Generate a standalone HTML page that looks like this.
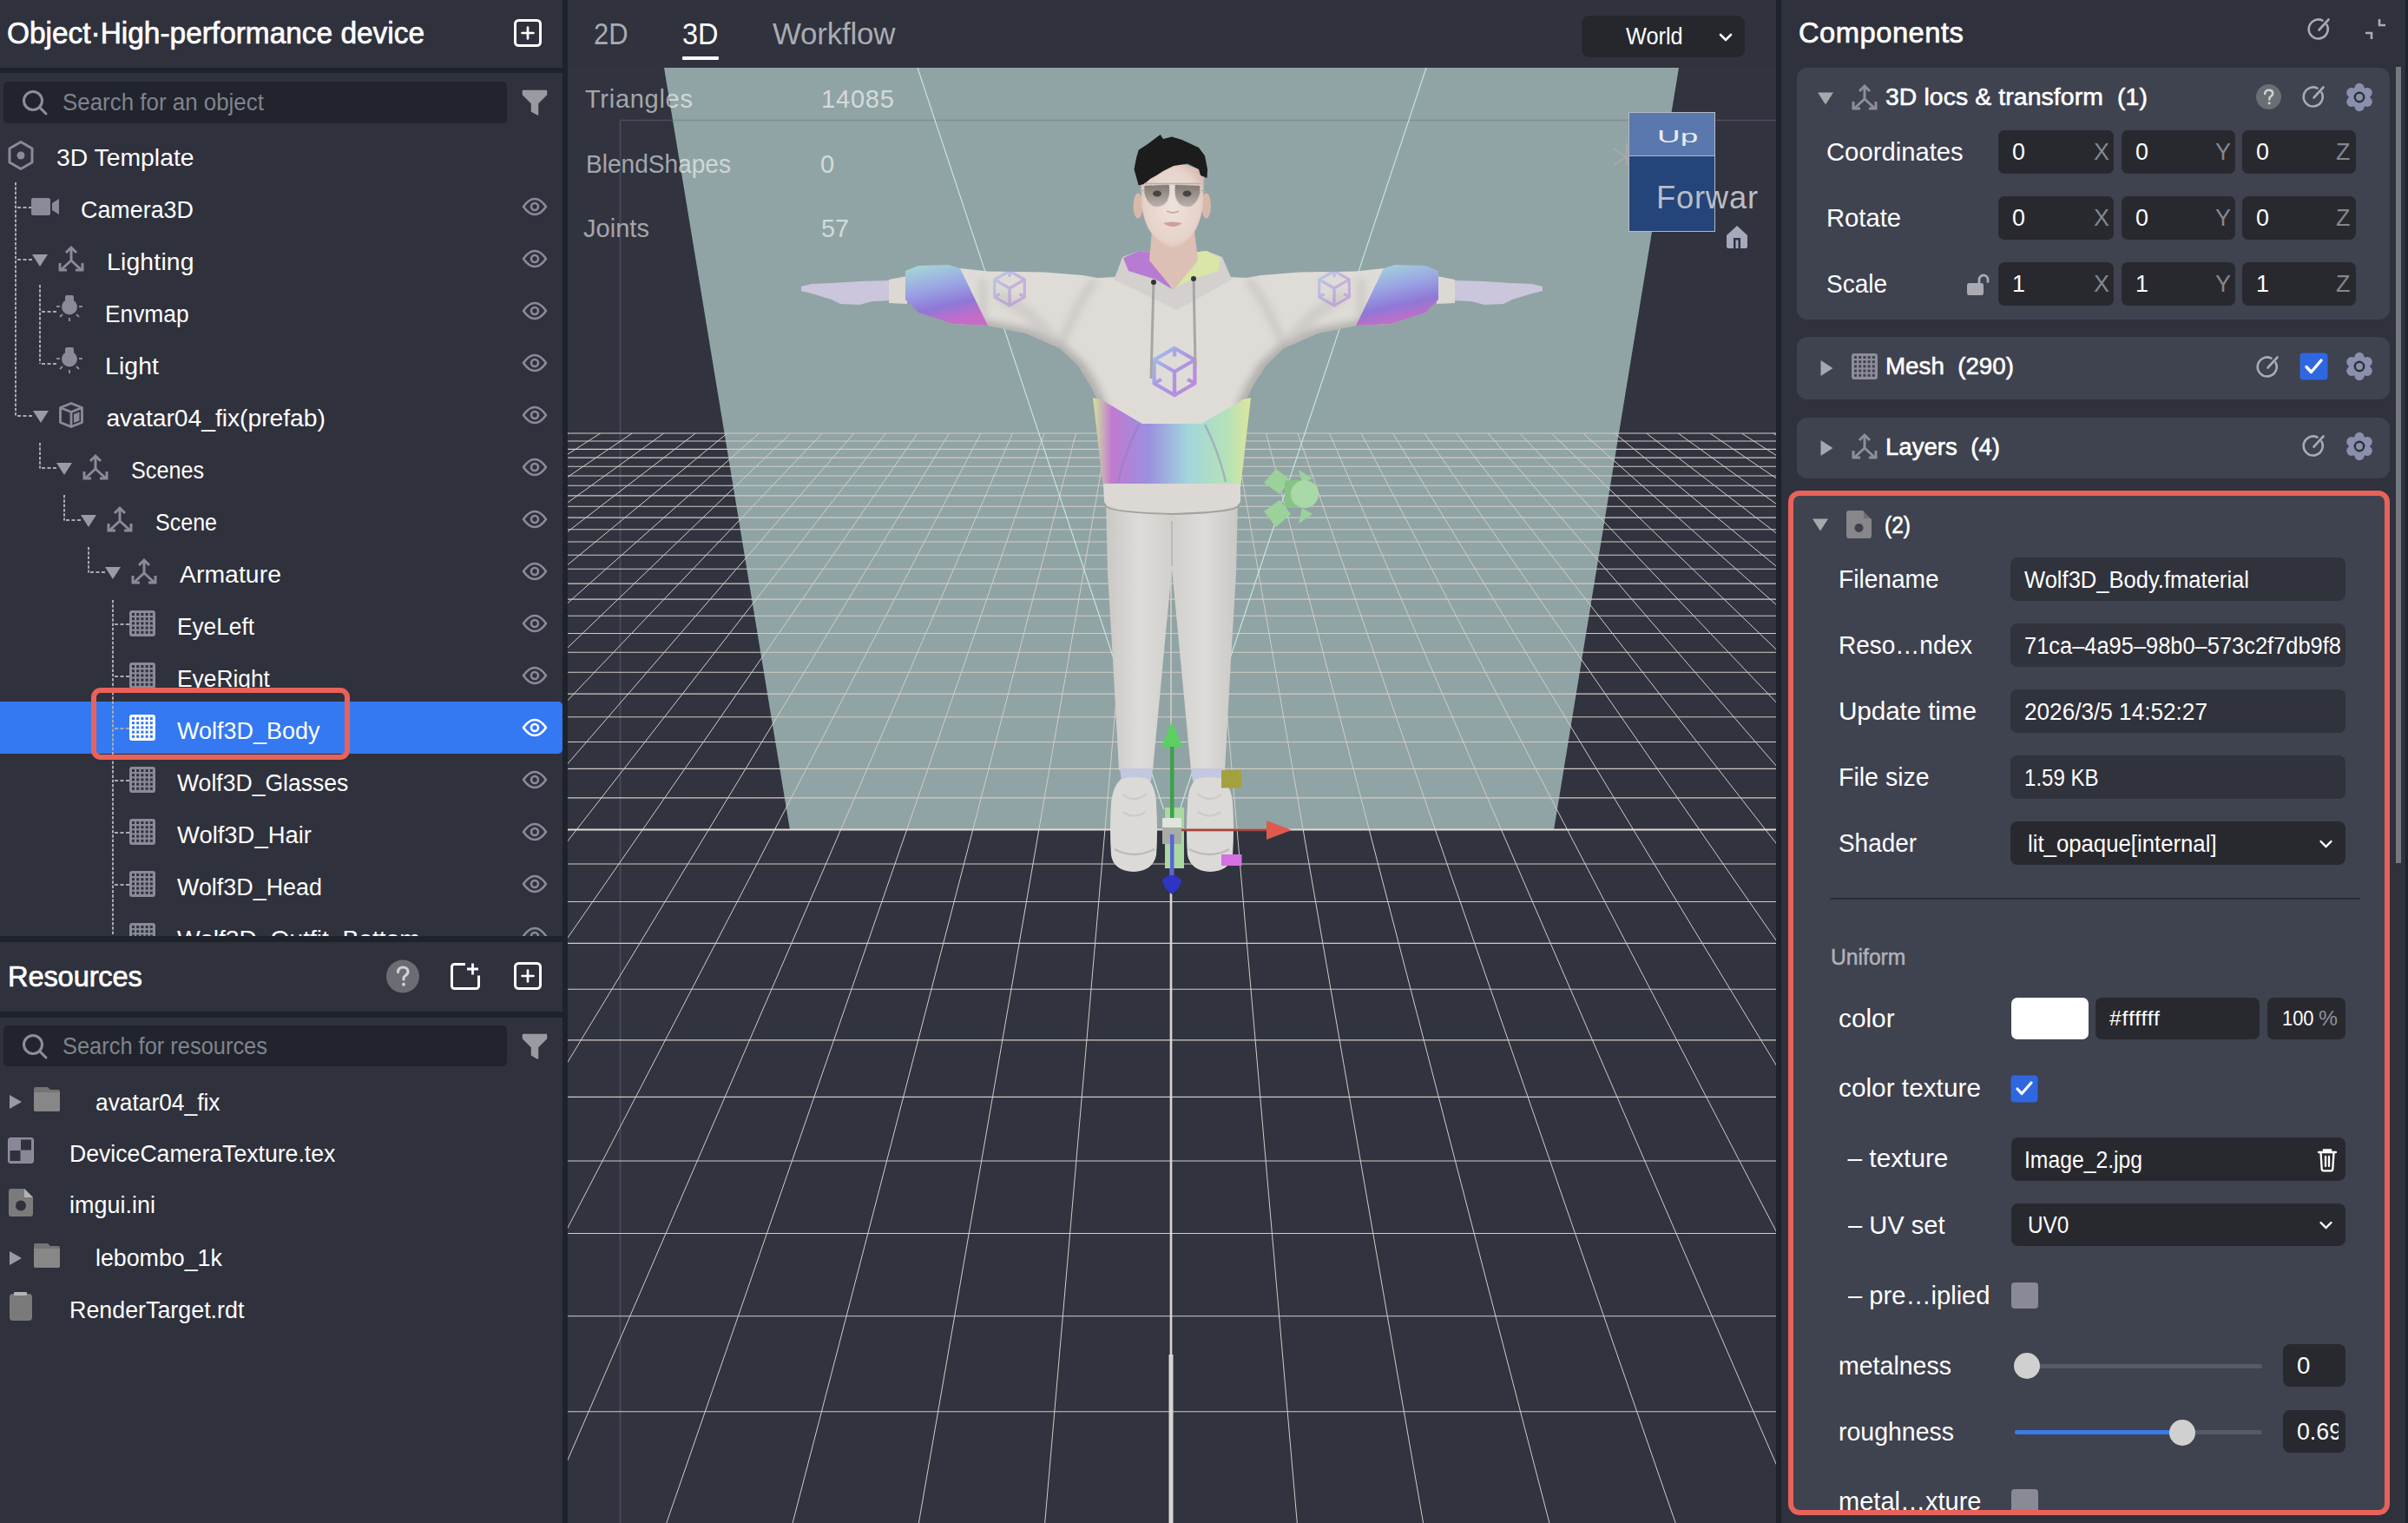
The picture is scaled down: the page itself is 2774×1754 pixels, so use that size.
<!DOCTYPE html>
<html><head><meta charset="utf-8"><title>Editor</title>
<style>
*{margin:0;padding:0;box-sizing:border-box}
html,body{width:2774px;height:1754px;overflow:hidden;background:#2f313c;font-family:"Liberation Sans",sans-serif}
.a{position:absolute}
.t{position:absolute;white-space:pre;line-height:1}
svg.a{overflow:visible}
</style></head><body>
<div class="a" style="left:0.0px;top:0.0px;width:648.0px;height:1754.0px;background:#2f313c;"></div>
<div class="a" style="left:648.0px;top:0.0px;width:6.0px;height:1754.0px;background:#1e232b;"></div>
<div class="a" style="left:0.0px;top:78.0px;width:648.0px;height:6.0px;background:#1e232b;"></div>
<div class="t" style="left:8.0px;top:21.1px;font-size:34.16px;color:#fff;-webkit-text-stroke:0.7px #fff;transform:scaleX(0.9783);transform-origin:0.0px 0;">Object·High-performance device</div>
<svg class="a" style="left:590px;top:20px;" width="36" height="36" viewBox="0 0 36 36"><rect x="3.5" y="3.5" width="29" height="29" rx="4" fill="none" stroke="#fff" stroke-width="3"/><path d="M18 11.5v13M11.5 18h13" stroke="#fff" stroke-width="2.7" stroke-linecap="round"/></svg>
<div class="a" style="left:4.0px;top:94.0px;width:580.0px;height:47.5px;background:#21242c;border-radius:5px;"></div>
<svg class="a" style="left:22px;top:101px;" width="36" height="36" viewBox="0 0 36 36"><circle cx="16" cy="15" r="10.5" fill="none" stroke="#8e8e9a" stroke-width="3"/><path d="M24 23l7 7" stroke="#8e8e9a" stroke-width="3" stroke-linecap="round"/></svg>
<div class="t" style="left:72.0px;top:103.6px;font-size:27.62px;color:#80838e;transform:scaleX(0.9386);transform-origin:0.0px 0;">Search for an object</div>
<svg class="a" style="left:600px;top:102px;" width="32" height="32" viewBox="0 0 32 32"><path d="M2.5 2.5h27v4.5l-10 10v13l-7-4v-9l-10-10z" fill="#9a9aa2" stroke="#9a9aa2" stroke-width="1.5" stroke-linejoin="round"/></svg>
<div class="a" style="left:0.0px;top:808.0px;width:648.0px;height:60.0px;background:#3478f2;border-radius:0 5px 5px 0;"></div>
<svg class="a" style="left:8px;top:161px;" width="32" height="36" viewBox="0 0 32 36"><path d="M16 2.5L29 10v16L16 33.5 3 26V10z" fill="none" stroke="#8a8a99" stroke-width="3" stroke-linejoin="round"/><circle cx="16" cy="18" r="4.5" fill="#8a8a99"/></svg>
<div class="t" style="left:65.0px;top:167.0px;font-size:28.34px;color:#fff;">3D Template</div>
<svg class="a" style="left:16px;top:210px;" width="4" height="270" viewBox="0 0 4 270"><path d="M2 0V269.0" stroke="#a9a9b1" stroke-width="2" stroke-dasharray="3.5 1.8"/></svg>
<svg class="a" style="left:20px;top:237px;" width="17" height="4" viewBox="0 0 17 4"><path d="M0 2H16.0" stroke="#a9a9b1" stroke-width="2" stroke-dasharray="4 2.5"/></svg>
<div class="a" style="left:36.0px;top:228.0px;width:22.0px;height:20.0px;background:#8a8a99;border-radius:2px;"></div>
<svg class="a" style="left:60px;top:228px;" width="9" height="20" viewBox="0 0 9 20"><path d="M0 6L8 1v18L0 14z" fill="#8a8a99"/></svg>
<div class="t" style="left:93.0px;top:227.0px;font-size:28.34px;color:#fff;transform:scaleX(0.9486);transform-origin:0.0px 0;">Camera3D</div>
<svg class="a" style="left:600px;top:226px;" width="32" height="24" viewBox="0 0 32 24"><path d="M3 12C7.5 5.5 11.5 3 16 3S24.5 5.5 29 12C24.5 18.5 20.5 21 16 21S7.5 18.5 3 12Z" fill="none" stroke="#8a8a99" stroke-width="2.6" stroke-linejoin="round"/><circle cx="16" cy="12" r="4" fill="none" stroke="#8a8a99" stroke-width="2.6"/></svg>
<svg class="a" style="left:20px;top:296.5px;" width="18" height="4" viewBox="0 0 18 4"><path d="M0 2H17.0" stroke="#a9a9b1" stroke-width="2" stroke-dasharray="4 2.5"/></svg>
<svg class="a" style="left:37px;top:292px;" width="18" height="16" viewBox="0 0 18 16"><path d="M0 1h18l-9 14z" fill="#9a9aa2"/></svg>
<svg class="a" style="left:66px;top:282px;" width="32" height="32" viewBox="0 0 32 32"><path d="M16 3v15M16 18L4 29M16 18l12 11" stroke="#8a8a99" stroke-width="3" fill="none"/><path d="M10 9l6-6 6 6M3 21v8h8M29 21v8h-8" stroke="#8a8a99" stroke-width="3" fill="none"/></svg>
<div class="t" style="left:123.0px;top:287.0px;font-size:28.34px;color:#fff;letter-spacing:0.19px;">Lighting</div>
<svg class="a" style="left:600px;top:286px;" width="32" height="24" viewBox="0 0 32 24"><path d="M3 12C7.5 5.5 11.5 3 16 3S24.5 5.5 29 12C24.5 18.5 20.5 21 16 21S7.5 18.5 3 12Z" fill="none" stroke="#8a8a99" stroke-width="2.6" stroke-linejoin="round"/><circle cx="16" cy="12" r="4" fill="none" stroke="#8a8a99" stroke-width="2.6"/></svg>
<svg class="a" style="left:44px;top:328px;" width="4" height="92" viewBox="0 0 4 92"><path d="M2 0V91.0" stroke="#a9a9b1" stroke-width="2" stroke-dasharray="3.5 1.8"/></svg>
<svg class="a" style="left:48px;top:356.5px;" width="19" height="4" viewBox="0 0 19 4"><path d="M0 2H18.0" stroke="#a9a9b1" stroke-width="2" stroke-dasharray="4 2.5"/></svg>
<svg class="a" style="left:64px;top:340px;" width="32" height="32" viewBox="0 0 32 32"><rect x="11" y="0" width="10" height="9" rx="2" fill="#8a8a99"/><circle cx="16" cy="13.5" r="9" fill="#8a8a99"/><path d="M1 13h4M27 13h4M5 25l3-3M27 25l-3-3M16 26v4" stroke="#8a8a99" stroke-width="2"/></svg>
<div class="t" style="left:121.0px;top:347.0px;font-size:28.34px;color:#fff;transform:scaleX(0.9292);transform-origin:0.0px 0;">Envmap</div>
<svg class="a" style="left:600px;top:346px;" width="32" height="24" viewBox="0 0 32 24"><path d="M3 12C7.5 5.5 11.5 3 16 3S24.5 5.5 29 12C24.5 18.5 20.5 21 16 21S7.5 18.5 3 12Z" fill="none" stroke="#8a8a99" stroke-width="2.6" stroke-linejoin="round"/><circle cx="16" cy="12" r="4" fill="none" stroke="#8a8a99" stroke-width="2.6"/></svg>
<svg class="a" style="left:48px;top:416.5px;" width="19" height="4" viewBox="0 0 19 4"><path d="M0 2H18.0" stroke="#a9a9b1" stroke-width="2" stroke-dasharray="4 2.5"/></svg>
<svg class="a" style="left:64px;top:400px;" width="32" height="32" viewBox="0 0 32 32"><rect x="11" y="0" width="10" height="9" rx="2" fill="#8a8a99"/><circle cx="16" cy="13.5" r="9" fill="#8a8a99"/><path d="M1 13h4M27 13h4M5 25l3-3M27 25l-3-3M16 26v4" stroke="#8a8a99" stroke-width="2"/></svg>
<div class="t" style="left:121.0px;top:407.0px;font-size:28.34px;color:#fff;letter-spacing:0.14px;">Light</div>
<svg class="a" style="left:600px;top:406px;" width="32" height="24" viewBox="0 0 32 24"><path d="M3 12C7.5 5.5 11.5 3 16 3S24.5 5.5 29 12C24.5 18.5 20.5 21 16 21S7.5 18.5 3 12Z" fill="none" stroke="#8a8a99" stroke-width="2.6" stroke-linejoin="round"/><circle cx="16" cy="12" r="4" fill="none" stroke="#8a8a99" stroke-width="2.6"/></svg>
<svg class="a" style="left:20px;top:476.5px;" width="19" height="4" viewBox="0 0 19 4"><path d="M0 2H18.0" stroke="#a9a9b1" stroke-width="2" stroke-dasharray="4 2.5"/></svg>
<svg class="a" style="left:38px;top:472px;" width="18" height="16" viewBox="0 0 18 16"><path d="M0 1h18l-9 14z" fill="#9a9aa2"/></svg>
<svg class="a" style="left:67px;top:462px;" width="30" height="32" viewBox="0 0 30 32"><path d="M15 2.5L27.5 7.5v17L15 29.5 2.5 24.5v-17z M2.5 7.5L15 12.5 27.5 7.5 M15 12.5v17" fill="none" stroke="#8a8a99" stroke-width="2.8" stroke-linejoin="round"/><path d="M18 15l6.5-2.5v10L18 25z" fill="#8a8a99"/></svg>
<div class="t" style="left:122.4px;top:467.0px;font-size:28.34px;color:#fff;letter-spacing:-0.05px;">avatar04_fix(prefab)</div>
<svg class="a" style="left:600px;top:466px;" width="32" height="24" viewBox="0 0 32 24"><path d="M3 12C7.5 5.5 11.5 3 16 3S24.5 5.5 29 12C24.5 18.5 20.5 21 16 21S7.5 18.5 3 12Z" fill="none" stroke="#8a8a99" stroke-width="2.6" stroke-linejoin="round"/><circle cx="16" cy="12" r="4" fill="none" stroke="#8a8a99" stroke-width="2.6"/></svg>
<svg class="a" style="left:44px;top:510px;" width="4" height="30" viewBox="0 0 4 30"><path d="M2 0V29.5" stroke="#a9a9b1" stroke-width="2" stroke-dasharray="3.5 1.8"/></svg>
<svg class="a" style="left:48px;top:536.5px;" width="18" height="4" viewBox="0 0 18 4"><path d="M0 2H17.0" stroke="#a9a9b1" stroke-width="2" stroke-dasharray="4 2.5"/></svg>
<svg class="a" style="left:65px;top:532px;" width="18" height="16" viewBox="0 0 18 16"><path d="M0 1h18l-9 14z" fill="#9a9aa2"/></svg>
<svg class="a" style="left:94px;top:522px;" width="32" height="32" viewBox="0 0 32 32"><path d="M16 3v15M16 18L4 29M16 18l12 11" stroke="#8a8a99" stroke-width="3" fill="none"/><path d="M10 9l6-6 6 6M3 21v8h8M29 21v8h-8" stroke="#8a8a99" stroke-width="3" fill="none"/></svg>
<div class="t" style="left:151.0px;top:527.0px;font-size:28.34px;color:#fff;transform:scaleX(0.8887);transform-origin:0.0px 0;">Scenes</div>
<svg class="a" style="left:600px;top:526px;" width="32" height="24" viewBox="0 0 32 24"><path d="M3 12C7.5 5.5 11.5 3 16 3S24.5 5.5 29 12C24.5 18.5 20.5 21 16 21S7.5 18.5 3 12Z" fill="none" stroke="#8a8a99" stroke-width="2.6" stroke-linejoin="round"/><circle cx="16" cy="12" r="4" fill="none" stroke="#8a8a99" stroke-width="2.6"/></svg>
<svg class="a" style="left:72px;top:570px;" width="4" height="30" viewBox="0 0 4 30"><path d="M2 0V29.5" stroke="#a9a9b1" stroke-width="2" stroke-dasharray="3.5 1.8"/></svg>
<svg class="a" style="left:76px;top:596.5px;" width="18" height="4" viewBox="0 0 18 4"><path d="M0 2H17.0" stroke="#a9a9b1" stroke-width="2" stroke-dasharray="4 2.5"/></svg>
<svg class="a" style="left:93px;top:592px;" width="18" height="16" viewBox="0 0 18 16"><path d="M0 1h18l-9 14z" fill="#9a9aa2"/></svg>
<svg class="a" style="left:122px;top:582px;" width="32" height="32" viewBox="0 0 32 32"><path d="M16 3v15M16 18L4 29M16 18l12 11" stroke="#8a8a99" stroke-width="3" fill="none"/><path d="M10 9l6-6 6 6M3 21v8h8M29 21v8h-8" stroke="#8a8a99" stroke-width="3" fill="none"/></svg>
<div class="t" style="left:179.0px;top:587.0px;font-size:28.34px;color:#fff;transform:scaleX(0.8836);transform-origin:0.0px 0;">Scene</div>
<svg class="a" style="left:600px;top:586px;" width="32" height="24" viewBox="0 0 32 24"><path d="M3 12C7.5 5.5 11.5 3 16 3S24.5 5.5 29 12C24.5 18.5 20.5 21 16 21S7.5 18.5 3 12Z" fill="none" stroke="#8a8a99" stroke-width="2.6" stroke-linejoin="round"/><circle cx="16" cy="12" r="4" fill="none" stroke="#8a8a99" stroke-width="2.6"/></svg>
<svg class="a" style="left:100px;top:630px;" width="4" height="30" viewBox="0 0 4 30"><path d="M2 0V29.5" stroke="#a9a9b1" stroke-width="2" stroke-dasharray="3.5 1.8"/></svg>
<svg class="a" style="left:104px;top:656.5px;" width="18" height="4" viewBox="0 0 18 4"><path d="M0 2H17.0" stroke="#a9a9b1" stroke-width="2" stroke-dasharray="4 2.5"/></svg>
<svg class="a" style="left:121px;top:652px;" width="18" height="16" viewBox="0 0 18 16"><path d="M0 1h18l-9 14z" fill="#9a9aa2"/></svg>
<svg class="a" style="left:150px;top:642px;" width="32" height="32" viewBox="0 0 32 32"><path d="M16 3v15M16 18L4 29M16 18l12 11" stroke="#8a8a99" stroke-width="3" fill="none"/><path d="M10 9l6-6 6 6M3 21v8h8M29 21v8h-8" stroke="#8a8a99" stroke-width="3" fill="none"/></svg>
<div class="t" style="left:207.0px;top:647.0px;font-size:28.34px;color:#fff;letter-spacing:0.06px;">Armature</div>
<svg class="a" style="left:600px;top:646px;" width="32" height="24" viewBox="0 0 32 24"><path d="M3 12C7.5 5.5 11.5 3 16 3S24.5 5.5 29 12C24.5 18.5 20.5 21 16 21S7.5 18.5 3 12Z" fill="none" stroke="#8a8a99" stroke-width="2.6" stroke-linejoin="round"/><circle cx="16" cy="12" r="4" fill="none" stroke="#8a8a99" stroke-width="2.6"/></svg>
<svg class="a" style="left:127.5px;top:691px;" width="4" height="388" viewBox="0 0 4 388"><path d="M2 0V387.0" stroke="#a9a9b1" stroke-width="2" stroke-dasharray="3.5 1.8"/></svg>
<svg class="a" style="left:131.5px;top:716.5px;" width="18" height="4" viewBox="0 0 18 4"><path d="M0 2H17.5" stroke="#a9a9b1" stroke-width="2" stroke-dasharray="4 2.5"/></svg>
<svg class="a" style="left:149px;top:703px;" width="30" height="30" viewBox="0 0 30 30"><rect x="0" y="0" width="30" height="30" rx="3" fill="#8a8a99"/><rect x="3.0" y="3.0" width="3" height="3" fill="#2f313c"/><rect x="8.2" y="3.0" width="3" height="3" fill="#2f313c"/><rect x="13.4" y="3.0" width="3" height="3" fill="#2f313c"/><rect x="18.6" y="3.0" width="3" height="3" fill="#2f313c"/><rect x="23.8" y="3.0" width="3" height="3" fill="#2f313c"/><rect x="3.0" y="8.2" width="3" height="3" fill="#2f313c"/><rect x="8.2" y="8.2" width="3" height="3" fill="#2f313c"/><rect x="13.4" y="8.2" width="3" height="3" fill="#2f313c"/><rect x="18.6" y="8.2" width="3" height="3" fill="#2f313c"/><rect x="23.8" y="8.2" width="3" height="3" fill="#2f313c"/><rect x="3.0" y="13.4" width="3" height="3" fill="#2f313c"/><rect x="8.2" y="13.4" width="3" height="3" fill="#2f313c"/><rect x="13.4" y="13.4" width="3" height="3" fill="#2f313c"/><rect x="18.6" y="13.4" width="3" height="3" fill="#2f313c"/><rect x="23.8" y="13.4" width="3" height="3" fill="#2f313c"/><rect x="3.0" y="18.6" width="3" height="3" fill="#2f313c"/><rect x="8.2" y="18.6" width="3" height="3" fill="#2f313c"/><rect x="13.4" y="18.6" width="3" height="3" fill="#2f313c"/><rect x="18.6" y="18.6" width="3" height="3" fill="#2f313c"/><rect x="23.8" y="18.6" width="3" height="3" fill="#2f313c"/><rect x="3.0" y="23.8" width="3" height="3" fill="#2f313c"/><rect x="8.2" y="23.8" width="3" height="3" fill="#2f313c"/><rect x="13.4" y="23.8" width="3" height="3" fill="#2f313c"/><rect x="18.6" y="23.8" width="3" height="3" fill="#2f313c"/><rect x="23.8" y="23.8" width="3" height="3" fill="#2f313c"/></svg>
<svg class="a" style="left:600px;top:706px;" width="32" height="24" viewBox="0 0 32 24"><path d="M3 12C7.5 5.5 11.5 3 16 3S24.5 5.5 29 12C24.5 18.5 20.5 21 16 21S7.5 18.5 3 12Z" fill="none" stroke="#8a8a99" stroke-width="2.6" stroke-linejoin="round"/><circle cx="16" cy="12" r="4" fill="none" stroke="#8a8a99" stroke-width="2.6"/></svg>
<div class="t" style="left:204.0px;top:707.0px;font-size:28.34px;color:#fff;transform:scaleX(0.9260);transform-origin:0.0px 0;">EyeLeft</div>
<svg class="a" style="left:131.5px;top:776.5px;" width="18" height="4" viewBox="0 0 18 4"><path d="M0 2H17.5" stroke="#a9a9b1" stroke-width="2" stroke-dasharray="4 2.5"/></svg>
<svg class="a" style="left:149px;top:763px;" width="30" height="30" viewBox="0 0 30 30"><rect x="0" y="0" width="30" height="30" rx="3" fill="#8a8a99"/><rect x="3.0" y="3.0" width="3" height="3" fill="#2f313c"/><rect x="8.2" y="3.0" width="3" height="3" fill="#2f313c"/><rect x="13.4" y="3.0" width="3" height="3" fill="#2f313c"/><rect x="18.6" y="3.0" width="3" height="3" fill="#2f313c"/><rect x="23.8" y="3.0" width="3" height="3" fill="#2f313c"/><rect x="3.0" y="8.2" width="3" height="3" fill="#2f313c"/><rect x="8.2" y="8.2" width="3" height="3" fill="#2f313c"/><rect x="13.4" y="8.2" width="3" height="3" fill="#2f313c"/><rect x="18.6" y="8.2" width="3" height="3" fill="#2f313c"/><rect x="23.8" y="8.2" width="3" height="3" fill="#2f313c"/><rect x="3.0" y="13.4" width="3" height="3" fill="#2f313c"/><rect x="8.2" y="13.4" width="3" height="3" fill="#2f313c"/><rect x="13.4" y="13.4" width="3" height="3" fill="#2f313c"/><rect x="18.6" y="13.4" width="3" height="3" fill="#2f313c"/><rect x="23.8" y="13.4" width="3" height="3" fill="#2f313c"/><rect x="3.0" y="18.6" width="3" height="3" fill="#2f313c"/><rect x="8.2" y="18.6" width="3" height="3" fill="#2f313c"/><rect x="13.4" y="18.6" width="3" height="3" fill="#2f313c"/><rect x="18.6" y="18.6" width="3" height="3" fill="#2f313c"/><rect x="23.8" y="18.6" width="3" height="3" fill="#2f313c"/><rect x="3.0" y="23.8" width="3" height="3" fill="#2f313c"/><rect x="8.2" y="23.8" width="3" height="3" fill="#2f313c"/><rect x="13.4" y="23.8" width="3" height="3" fill="#2f313c"/><rect x="18.6" y="23.8" width="3" height="3" fill="#2f313c"/><rect x="23.8" y="23.8" width="3" height="3" fill="#2f313c"/></svg>
<svg class="a" style="left:600px;top:766px;" width="32" height="24" viewBox="0 0 32 24"><path d="M3 12C7.5 5.5 11.5 3 16 3S24.5 5.5 29 12C24.5 18.5 20.5 21 16 21S7.5 18.5 3 12Z" fill="none" stroke="#8a8a99" stroke-width="2.6" stroke-linejoin="round"/><circle cx="16" cy="12" r="4" fill="none" stroke="#8a8a99" stroke-width="2.6"/></svg>
<div class="t" style="left:204.0px;top:767.0px;font-size:28.34px;color:#fff;transform:scaleX(0.9303);transform-origin:0.0px 0;">EyeRight</div>
<svg class="a" style="left:131.5px;top:836.5px;" width="18" height="4" viewBox="0 0 18 4"><path d="M0 2H17.5" stroke="#a9a9b1" stroke-width="2" stroke-dasharray="4 2.5"/></svg>
<svg class="a" style="left:149px;top:823px;" width="30" height="30" viewBox="0 0 30 30"><rect x="0" y="0" width="30" height="30" rx="3" fill="#fff"/><rect x="3.0" y="3.0" width="3" height="3" fill="#3478f2"/><rect x="8.2" y="3.0" width="3" height="3" fill="#3478f2"/><rect x="13.4" y="3.0" width="3" height="3" fill="#3478f2"/><rect x="18.6" y="3.0" width="3" height="3" fill="#3478f2"/><rect x="23.8" y="3.0" width="3" height="3" fill="#3478f2"/><rect x="3.0" y="8.2" width="3" height="3" fill="#3478f2"/><rect x="8.2" y="8.2" width="3" height="3" fill="#3478f2"/><rect x="13.4" y="8.2" width="3" height="3" fill="#3478f2"/><rect x="18.6" y="8.2" width="3" height="3" fill="#3478f2"/><rect x="23.8" y="8.2" width="3" height="3" fill="#3478f2"/><rect x="3.0" y="13.4" width="3" height="3" fill="#3478f2"/><rect x="8.2" y="13.4" width="3" height="3" fill="#3478f2"/><rect x="13.4" y="13.4" width="3" height="3" fill="#3478f2"/><rect x="18.6" y="13.4" width="3" height="3" fill="#3478f2"/><rect x="23.8" y="13.4" width="3" height="3" fill="#3478f2"/><rect x="3.0" y="18.6" width="3" height="3" fill="#3478f2"/><rect x="8.2" y="18.6" width="3" height="3" fill="#3478f2"/><rect x="13.4" y="18.6" width="3" height="3" fill="#3478f2"/><rect x="18.6" y="18.6" width="3" height="3" fill="#3478f2"/><rect x="23.8" y="18.6" width="3" height="3" fill="#3478f2"/><rect x="3.0" y="23.8" width="3" height="3" fill="#3478f2"/><rect x="8.2" y="23.8" width="3" height="3" fill="#3478f2"/><rect x="13.4" y="23.8" width="3" height="3" fill="#3478f2"/><rect x="18.6" y="23.8" width="3" height="3" fill="#3478f2"/><rect x="23.8" y="23.8" width="3" height="3" fill="#3478f2"/></svg>
<svg class="a" style="left:600px;top:826px;" width="32" height="24" viewBox="0 0 32 24"><path d="M3 12C7.5 5.5 11.5 3 16 3S24.5 5.5 29 12C24.5 18.5 20.5 21 16 21S7.5 18.5 3 12Z" fill="none" stroke="#fff" stroke-width="2.6" stroke-linejoin="round"/><circle cx="16" cy="12" r="4" fill="none" stroke="#fff" stroke-width="2.6"/></svg>
<div class="t" style="left:204.0px;top:827.0px;font-size:28.34px;color:#fff;transform:scaleX(0.9521);transform-origin:0.0px 0;">Wolf3D_Body</div>
<svg class="a" style="left:131.5px;top:896.5px;" width="18" height="4" viewBox="0 0 18 4"><path d="M0 2H17.5" stroke="#a9a9b1" stroke-width="2" stroke-dasharray="4 2.5"/></svg>
<svg class="a" style="left:149px;top:883px;" width="30" height="30" viewBox="0 0 30 30"><rect x="0" y="0" width="30" height="30" rx="3" fill="#8a8a99"/><rect x="3.0" y="3.0" width="3" height="3" fill="#2f313c"/><rect x="8.2" y="3.0" width="3" height="3" fill="#2f313c"/><rect x="13.4" y="3.0" width="3" height="3" fill="#2f313c"/><rect x="18.6" y="3.0" width="3" height="3" fill="#2f313c"/><rect x="23.8" y="3.0" width="3" height="3" fill="#2f313c"/><rect x="3.0" y="8.2" width="3" height="3" fill="#2f313c"/><rect x="8.2" y="8.2" width="3" height="3" fill="#2f313c"/><rect x="13.4" y="8.2" width="3" height="3" fill="#2f313c"/><rect x="18.6" y="8.2" width="3" height="3" fill="#2f313c"/><rect x="23.8" y="8.2" width="3" height="3" fill="#2f313c"/><rect x="3.0" y="13.4" width="3" height="3" fill="#2f313c"/><rect x="8.2" y="13.4" width="3" height="3" fill="#2f313c"/><rect x="13.4" y="13.4" width="3" height="3" fill="#2f313c"/><rect x="18.6" y="13.4" width="3" height="3" fill="#2f313c"/><rect x="23.8" y="13.4" width="3" height="3" fill="#2f313c"/><rect x="3.0" y="18.6" width="3" height="3" fill="#2f313c"/><rect x="8.2" y="18.6" width="3" height="3" fill="#2f313c"/><rect x="13.4" y="18.6" width="3" height="3" fill="#2f313c"/><rect x="18.6" y="18.6" width="3" height="3" fill="#2f313c"/><rect x="23.8" y="18.6" width="3" height="3" fill="#2f313c"/><rect x="3.0" y="23.8" width="3" height="3" fill="#2f313c"/><rect x="8.2" y="23.8" width="3" height="3" fill="#2f313c"/><rect x="13.4" y="23.8" width="3" height="3" fill="#2f313c"/><rect x="18.6" y="23.8" width="3" height="3" fill="#2f313c"/><rect x="23.8" y="23.8" width="3" height="3" fill="#2f313c"/></svg>
<svg class="a" style="left:600px;top:886px;" width="32" height="24" viewBox="0 0 32 24"><path d="M3 12C7.5 5.5 11.5 3 16 3S24.5 5.5 29 12C24.5 18.5 20.5 21 16 21S7.5 18.5 3 12Z" fill="none" stroke="#8a8a99" stroke-width="2.6" stroke-linejoin="round"/><circle cx="16" cy="12" r="4" fill="none" stroke="#8a8a99" stroke-width="2.6"/></svg>
<div class="t" style="left:204.0px;top:887.0px;font-size:28.34px;color:#fff;transform:scaleX(0.9380);transform-origin:0.0px 0;">Wolf3D_Glasses</div>
<svg class="a" style="left:131.5px;top:956.5px;" width="18" height="4" viewBox="0 0 18 4"><path d="M0 2H17.5" stroke="#a9a9b1" stroke-width="2" stroke-dasharray="4 2.5"/></svg>
<svg class="a" style="left:149px;top:943px;" width="30" height="30" viewBox="0 0 30 30"><rect x="0" y="0" width="30" height="30" rx="3" fill="#8a8a99"/><rect x="3.0" y="3.0" width="3" height="3" fill="#2f313c"/><rect x="8.2" y="3.0" width="3" height="3" fill="#2f313c"/><rect x="13.4" y="3.0" width="3" height="3" fill="#2f313c"/><rect x="18.6" y="3.0" width="3" height="3" fill="#2f313c"/><rect x="23.8" y="3.0" width="3" height="3" fill="#2f313c"/><rect x="3.0" y="8.2" width="3" height="3" fill="#2f313c"/><rect x="8.2" y="8.2" width="3" height="3" fill="#2f313c"/><rect x="13.4" y="8.2" width="3" height="3" fill="#2f313c"/><rect x="18.6" y="8.2" width="3" height="3" fill="#2f313c"/><rect x="23.8" y="8.2" width="3" height="3" fill="#2f313c"/><rect x="3.0" y="13.4" width="3" height="3" fill="#2f313c"/><rect x="8.2" y="13.4" width="3" height="3" fill="#2f313c"/><rect x="13.4" y="13.4" width="3" height="3" fill="#2f313c"/><rect x="18.6" y="13.4" width="3" height="3" fill="#2f313c"/><rect x="23.8" y="13.4" width="3" height="3" fill="#2f313c"/><rect x="3.0" y="18.6" width="3" height="3" fill="#2f313c"/><rect x="8.2" y="18.6" width="3" height="3" fill="#2f313c"/><rect x="13.4" y="18.6" width="3" height="3" fill="#2f313c"/><rect x="18.6" y="18.6" width="3" height="3" fill="#2f313c"/><rect x="23.8" y="18.6" width="3" height="3" fill="#2f313c"/><rect x="3.0" y="23.8" width="3" height="3" fill="#2f313c"/><rect x="8.2" y="23.8" width="3" height="3" fill="#2f313c"/><rect x="13.4" y="23.8" width="3" height="3" fill="#2f313c"/><rect x="18.6" y="23.8" width="3" height="3" fill="#2f313c"/><rect x="23.8" y="23.8" width="3" height="3" fill="#2f313c"/></svg>
<svg class="a" style="left:600px;top:946px;" width="32" height="24" viewBox="0 0 32 24"><path d="M3 12C7.5 5.5 11.5 3 16 3S24.5 5.5 29 12C24.5 18.5 20.5 21 16 21S7.5 18.5 3 12Z" fill="none" stroke="#8a8a99" stroke-width="2.6" stroke-linejoin="round"/><circle cx="16" cy="12" r="4" fill="none" stroke="#8a8a99" stroke-width="2.6"/></svg>
<div class="t" style="left:204.0px;top:947.0px;font-size:28.34px;color:#fff;transform:scaleX(0.9679);transform-origin:0.0px 0;">Wolf3D_Hair</div>
<svg class="a" style="left:131.5px;top:1016.5px;" width="18" height="4" viewBox="0 0 18 4"><path d="M0 2H17.5" stroke="#a9a9b1" stroke-width="2" stroke-dasharray="4 2.5"/></svg>
<svg class="a" style="left:149px;top:1003px;" width="30" height="30" viewBox="0 0 30 30"><rect x="0" y="0" width="30" height="30" rx="3" fill="#8a8a99"/><rect x="3.0" y="3.0" width="3" height="3" fill="#2f313c"/><rect x="8.2" y="3.0" width="3" height="3" fill="#2f313c"/><rect x="13.4" y="3.0" width="3" height="3" fill="#2f313c"/><rect x="18.6" y="3.0" width="3" height="3" fill="#2f313c"/><rect x="23.8" y="3.0" width="3" height="3" fill="#2f313c"/><rect x="3.0" y="8.2" width="3" height="3" fill="#2f313c"/><rect x="8.2" y="8.2" width="3" height="3" fill="#2f313c"/><rect x="13.4" y="8.2" width="3" height="3" fill="#2f313c"/><rect x="18.6" y="8.2" width="3" height="3" fill="#2f313c"/><rect x="23.8" y="8.2" width="3" height="3" fill="#2f313c"/><rect x="3.0" y="13.4" width="3" height="3" fill="#2f313c"/><rect x="8.2" y="13.4" width="3" height="3" fill="#2f313c"/><rect x="13.4" y="13.4" width="3" height="3" fill="#2f313c"/><rect x="18.6" y="13.4" width="3" height="3" fill="#2f313c"/><rect x="23.8" y="13.4" width="3" height="3" fill="#2f313c"/><rect x="3.0" y="18.6" width="3" height="3" fill="#2f313c"/><rect x="8.2" y="18.6" width="3" height="3" fill="#2f313c"/><rect x="13.4" y="18.6" width="3" height="3" fill="#2f313c"/><rect x="18.6" y="18.6" width="3" height="3" fill="#2f313c"/><rect x="23.8" y="18.6" width="3" height="3" fill="#2f313c"/><rect x="3.0" y="23.8" width="3" height="3" fill="#2f313c"/><rect x="8.2" y="23.8" width="3" height="3" fill="#2f313c"/><rect x="13.4" y="23.8" width="3" height="3" fill="#2f313c"/><rect x="18.6" y="23.8" width="3" height="3" fill="#2f313c"/><rect x="23.8" y="23.8" width="3" height="3" fill="#2f313c"/></svg>
<svg class="a" style="left:600px;top:1006px;" width="32" height="24" viewBox="0 0 32 24"><path d="M3 12C7.5 5.5 11.5 3 16 3S24.5 5.5 29 12C24.5 18.5 20.5 21 16 21S7.5 18.5 3 12Z" fill="none" stroke="#8a8a99" stroke-width="2.6" stroke-linejoin="round"/><circle cx="16" cy="12" r="4" fill="none" stroke="#8a8a99" stroke-width="2.6"/></svg>
<div class="t" style="left:204.0px;top:1007.0px;font-size:28.34px;color:#fff;transform:scaleX(0.9493);transform-origin:0.0px 0;">Wolf3D_Head</div>
<svg class="a" style="left:131.5px;top:1076.5px;" width="18" height="4" viewBox="0 0 18 4"><path d="M0 2H17.5" stroke="#a9a9b1" stroke-width="2" stroke-dasharray="4 2.5"/></svg>
<svg class="a" style="left:149px;top:1063px;" width="30" height="30" viewBox="0 0 30 30"><rect x="0" y="0" width="30" height="30" rx="3" fill="#8a8a99"/><rect x="3.0" y="3.0" width="3" height="3" fill="#2f313c"/><rect x="8.2" y="3.0" width="3" height="3" fill="#2f313c"/><rect x="13.4" y="3.0" width="3" height="3" fill="#2f313c"/><rect x="18.6" y="3.0" width="3" height="3" fill="#2f313c"/><rect x="23.8" y="3.0" width="3" height="3" fill="#2f313c"/><rect x="3.0" y="8.2" width="3" height="3" fill="#2f313c"/><rect x="8.2" y="8.2" width="3" height="3" fill="#2f313c"/><rect x="13.4" y="8.2" width="3" height="3" fill="#2f313c"/><rect x="18.6" y="8.2" width="3" height="3" fill="#2f313c"/><rect x="23.8" y="8.2" width="3" height="3" fill="#2f313c"/><rect x="3.0" y="13.4" width="3" height="3" fill="#2f313c"/><rect x="8.2" y="13.4" width="3" height="3" fill="#2f313c"/><rect x="13.4" y="13.4" width="3" height="3" fill="#2f313c"/><rect x="18.6" y="13.4" width="3" height="3" fill="#2f313c"/><rect x="23.8" y="13.4" width="3" height="3" fill="#2f313c"/><rect x="3.0" y="18.6" width="3" height="3" fill="#2f313c"/><rect x="8.2" y="18.6" width="3" height="3" fill="#2f313c"/><rect x="13.4" y="18.6" width="3" height="3" fill="#2f313c"/><rect x="18.6" y="18.6" width="3" height="3" fill="#2f313c"/><rect x="23.8" y="18.6" width="3" height="3" fill="#2f313c"/><rect x="3.0" y="23.8" width="3" height="3" fill="#2f313c"/><rect x="8.2" y="23.8" width="3" height="3" fill="#2f313c"/><rect x="13.4" y="23.8" width="3" height="3" fill="#2f313c"/><rect x="18.6" y="23.8" width="3" height="3" fill="#2f313c"/><rect x="23.8" y="23.8" width="3" height="3" fill="#2f313c"/></svg>
<svg class="a" style="left:600px;top:1066px;" width="32" height="24" viewBox="0 0 32 24"><path d="M3 12C7.5 5.5 11.5 3 16 3S24.5 5.5 29 12C24.5 18.5 20.5 21 16 21S7.5 18.5 3 12Z" fill="none" stroke="#8a8a99" stroke-width="2.6" stroke-linejoin="round"/><circle cx="16" cy="12" r="4" fill="none" stroke="#8a8a99" stroke-width="2.6"/></svg>
<div class="t" style="left:204.0px;top:1067.0px;font-size:28.34px;color:#fff;letter-spacing:-0.08px;">Wolf3D_Outfit_Bottom</div>
<div class="a" style="left:111.0px;top:798.0px;width:286.0px;height:10.0px;background:#2f313c;"></div>
<svg class="a" style="left:127.5px;top:797px;" width="4" height="13" viewBox="0 0 4 13"><path d="M2 0V12.0" stroke="#a9a9b1" stroke-width="2" stroke-dasharray="3.5 1.8"/></svg>
<div class="a" style="left:105px;top:792px;width:298px;height:83px;border:6px solid #e8625a;border-radius:11px"></div>
<div class="a" style="left:0.0px;top:1078.0px;width:648.0px;height:7.0px;background:#1e232b;"></div>
<div class="a" style="left:0.0px;top:1085.0px;width:648.0px;height:80.0px;background:#2f313c;"></div>
<div class="a" style="left:0.0px;top:1165.0px;width:648.0px;height:7.0px;background:#1e232b;"></div>
<div class="a" style="left:0.0px;top:1172.0px;width:648.0px;height:582.0px;background:#2f313c;"></div>
<div class="t" style="left:9.0px;top:1108.9px;font-size:32.70px;color:#fff;-webkit-text-stroke:0.7px #fff;letter-spacing:-0.17px;">Resources</div>
<svg class="a" style="left:444px;top:1104px;" width="40" height="40" viewBox="0 0 40 40"><circle cx="20" cy="20.5" r="19" fill="#6b6d75"/><path d="M14.5 15.5c0-3.5 2.5-5.5 5.8-5.5 3.4 0 5.7 2.1 5.7 5 0 2.5-1.6 3.6-3.2 4.7-1.3.9-1.8 1.6-1.8 3.2v1" fill="none" stroke="#d0d0d4" stroke-width="3.2" stroke-linecap="round"/><circle cx="21" cy="29.8" r="2" fill="#d0d0d4"/></svg>
<svg class="a" style="left:517px;top:1106px;" width="40" height="40" viewBox="0 0 40 40"><path d="M19 4.5H6.5a3 3 0 0 0-3 3v22a3 3 0 0 0 3 3h25a3 3 0 0 0 3-3V17.5" fill="none" stroke="#fff" stroke-width="3"/><path d="M27.5 3.5v13M21 10h13" stroke="#fff" stroke-width="2.8"/></svg>
<svg class="a" style="left:590px;top:1106px;" width="36" height="36" viewBox="0 0 36 36"><rect x="3.5" y="3.5" width="29" height="29" rx="4" fill="none" stroke="#fff" stroke-width="3"/><path d="M18 11.5v13M11.5 18h13" stroke="#fff" stroke-width="2.7" stroke-linecap="round"/></svg>
<div class="a" style="left:4.0px;top:1181.0px;width:580.0px;height:47.0px;background:#21242c;border-radius:5px;"></div>
<svg class="a" style="left:22px;top:1188px;" width="36" height="36" viewBox="0 0 36 36"><circle cx="16" cy="15" r="10.5" fill="none" stroke="#8e8e9a" stroke-width="3"/><path d="M24 23l7 7" stroke="#8e8e9a" stroke-width="3" stroke-linecap="round"/></svg>
<div class="t" style="left:72.0px;top:1190.6px;font-size:27.62px;color:#80838e;transform:scaleX(0.9207);transform-origin:0.0px 0;">Search for resources</div>
<svg class="a" style="left:600px;top:1189px;" width="32" height="32" viewBox="0 0 32 32"><path d="M2.5 2.5h27v4.5l-10 10v13l-7-4v-9l-10-10z" fill="#9a9aa2" stroke="#9a9aa2" stroke-width="1.5" stroke-linejoin="round"/></svg>
<svg class="a" style="left:10px;top:1260px;" width="16" height="18" viewBox="0 0 16 18"><path d="M1 1v16l14-8z" fill="#9a9aa2"/></svg>
<svg class="a" style="left:38px;top:1251px;" width="32" height="30" viewBox="0 0 32 30"><path d="M1 3a2 2 0 0 1 2-2h14l3 3h9a2 2 0 0 1 2 2v21a2 2 0 0 1-2 2H3a2 2 0 0 1-2-2z" fill="#747474"/><path d="M1 7h30v20a2 2 0 0 1-2 2H3a2 2 0 0 1-2-2z" fill="#878787"/></svg>
<div class="t" style="left:110.0px;top:1254.8px;font-size:28.34px;color:#fff;transform:scaleX(0.9300);transform-origin:0.0px 0;">avatar04_fix</div>
<svg class="a" style="left:8px;top:1309px;" width="32" height="32" viewBox="0 0 32 32"><rect x="1.5" y="1.5" width="29" height="29" rx="2.5" fill="#8a8898" stroke="#9593a2" stroke-width="1"/><rect x="16" y="3.5" width="12" height="12" fill="#2f313c"/><rect x="3.5" y="16" width="12" height="12" fill="#2f313c"/></svg>
<div class="t" style="left:80.0px;top:1314.0px;font-size:28.34px;color:#fff;transform:scaleX(0.9400);transform-origin:0.0px 0;">DeviceCameraTexture.tex</div>
<svg class="a" style="left:10px;top:1369px;" width="30" height="34" viewBox="0 0 30 34"><path d="M3 0h15l10 10v19a3 3 0 0 1-3 3H3a3 3 0 0 1-3-3V3a3 3 0 0 1 3-3z" fill="#7b7b7b"/><path d="M18 0l10 10h-10z" fill="#b3b3b3"/><circle cx="14" cy="19.5" r="6" fill="#2f313c"/></svg>
<div class="t" style="left:80.0px;top:1373.0px;font-size:28.34px;color:#fff;transform:scaleX(0.9523);transform-origin:0.0px 0;">imgui.ini</div>
<svg class="a" style="left:10px;top:1440px;" width="16" height="18" viewBox="0 0 16 18"><path d="M1 1v16l14-8z" fill="#9a9aa2"/></svg>
<svg class="a" style="left:38px;top:1431px;" width="32" height="30" viewBox="0 0 32 30"><path d="M1 3a2 2 0 0 1 2-2h14l3 3h9a2 2 0 0 1 2 2v21a2 2 0 0 1-2 2H3a2 2 0 0 1-2-2z" fill="#747474"/><path d="M1 7h30v20a2 2 0 0 1-2 2H3a2 2 0 0 1-2-2z" fill="#878787"/></svg>
<div class="t" style="left:110.0px;top:1434.0px;font-size:28.34px;color:#fff;transform:scaleX(0.9452);transform-origin:0.0px 0;">lebombo_1k</div>
<svg class="a" style="left:10px;top:1488px;" width="28" height="36" viewBox="0 0 28 36"><rect x="1" y="2" width="26" height="31" rx="4" fill="#7a7a7a"/><rect x="6" y="0" width="15" height="4" rx="1" fill="#b5b5b5"/></svg>
<div class="t" style="left:80.0px;top:1494.0px;font-size:28.34px;color:#fff;transform:scaleX(0.9474);transform-origin:0.0px 0;">RenderTarget.rdt</div>
<div class="a" style="left:654.0px;top:0.0px;width:1392.0px;height:78.0px;background:#30323e;"></div>
<div class="a" style="left:654.0px;top:78.0px;width:1392.0px;height:1676.0px;background:#31333f;"></div>
<div class="a" style="left:2046.0px;top:0.0px;width:6.0px;height:1754.0px;background:#1e232b;"></div>
<svg class="a" style="left:654px;top:78px;overflow:hidden" width="1392" height="1676" viewBox="654 78 1392 1676"><polygon points="765,78 1934,78 1790,956 910,956" fill="#90a4a5"/><line x1="714.5" y1="139" x2="714.5" y2="1754" stroke="rgba(110,112,130,0.46)" stroke-width="1.5"/><line x1="714.5" y1="138.5" x2="2046" y2="138.5" stroke="rgba(110,112,130,0.46)" stroke-width="1.5"/><line x1="654" y1="499.09" x2="2046" y2="499.09" stroke="#d3ccc5" stroke-width="1.05"/><line x1="654" y1="508.03" x2="2046" y2="508.03" stroke="#d3ccc5" stroke-width="1.05"/><line x1="654" y1="517.37" x2="2046" y2="517.37" stroke="#d3ccc5" stroke-width="1.05"/><line x1="654" y1="527.12" x2="2046" y2="527.12" stroke="#d3ccc5" stroke-width="1.05"/><line x1="654" y1="537.32" x2="2046" y2="537.32" stroke="#d3ccc5" stroke-width="1.05"/><line x1="654" y1="547.98" x2="2046" y2="547.98" stroke="#d3ccc5" stroke-width="1.05"/><line x1="654" y1="559.15" x2="2046" y2="559.15" stroke="#d3ccc5" stroke-width="1.05"/><line x1="654" y1="570.87" x2="2046" y2="570.87" stroke="#d3ccc5" stroke-width="1.05"/><line x1="654" y1="583.17" x2="2046" y2="583.17" stroke="#d3ccc5" stroke-width="1.05"/><line x1="654" y1="596.10" x2="2046" y2="596.10" stroke="#d3ccc5" stroke-width="1.05"/><line x1="654" y1="609.71" x2="2046" y2="609.71" stroke="#d3ccc5" stroke-width="1.05"/><line x1="654" y1="624.06" x2="2046" y2="624.06" stroke="#d3ccc5" stroke-width="1.05"/><line x1="654" y1="639.19" x2="2046" y2="639.19" stroke="#d3ccc5" stroke-width="1.05"/><line x1="654" y1="655.20" x2="2046" y2="655.20" stroke="#d3ccc5" stroke-width="1.05"/><line x1="654" y1="672.14" x2="2046" y2="672.14" stroke="#d3ccc5" stroke-width="1.05"/><line x1="654" y1="690.10" x2="2046" y2="690.10" stroke="#d3ccc5" stroke-width="1.05"/><line x1="654" y1="709.18" x2="2046" y2="709.18" stroke="#d3ccc5" stroke-width="1.05"/><line x1="654" y1="729.49" x2="2046" y2="729.49" stroke="#d3ccc5" stroke-width="1.05"/><line x1="654" y1="751.15" x2="2046" y2="751.15" stroke="#d3ccc5" stroke-width="1.05"/><line x1="654" y1="774.30" x2="2046" y2="774.30" stroke="#d3ccc5" stroke-width="1.05"/><line x1="654" y1="799.10" x2="2046" y2="799.10" stroke="#d3ccc5" stroke-width="1.05"/><line x1="654" y1="825.73" x2="2046" y2="825.73" stroke="#d3ccc5" stroke-width="1.05"/><line x1="654" y1="854.40" x2="2046" y2="854.40" stroke="#d3ccc5" stroke-width="1.05"/><line x1="654" y1="885.35" x2="2046" y2="885.35" stroke="#d3ccc5" stroke-width="1.05"/><line x1="654" y1="918.88" x2="2046" y2="918.88" stroke="#d3ccc5" stroke-width="1.05"/><line x1="654" y1="995.03" x2="2046" y2="995.03" stroke="#d3ccc5" stroke-width="1.05"/><line x1="654" y1="1038.52" x2="2046" y2="1038.52" stroke="#d3ccc5" stroke-width="1.05"/><line x1="654" y1="1086.35" x2="2046" y2="1086.35" stroke="#d3ccc5" stroke-width="1.05"/><line x1="654" y1="1139.18" x2="2046" y2="1139.18" stroke="#d3ccc5" stroke-width="1.05"/><line x1="654" y1="1197.85" x2="2046" y2="1197.85" stroke="#d3ccc5" stroke-width="1.05"/><line x1="654" y1="1263.39" x2="2046" y2="1263.39" stroke="#d3ccc5" stroke-width="1.05"/><line x1="654" y1="1337.07" x2="2046" y2="1337.07" stroke="#d3ccc5" stroke-width="1.05"/><line x1="654" y1="1420.52" x2="2046" y2="1420.52" stroke="#d3ccc5" stroke-width="1.05"/><line x1="654" y1="1515.81" x2="2046" y2="1515.81" stroke="#d3ccc5" stroke-width="1.05"/><line x1="654" y1="1625.66" x2="2046" y2="1625.66" stroke="#d3ccc5" stroke-width="1.05"/><line x1="-842.57" y1="499.09" x2="-7369.00" y2="1754" stroke="#d3ccc5" stroke-width="1.0"/><line x1="-806.04" y1="499.09" x2="-7223.70" y2="1754" stroke="#d3ccc5" stroke-width="1.0"/><line x1="-769.51" y1="499.09" x2="-7078.40" y2="1754" stroke="#d3ccc5" stroke-width="1.0"/><line x1="-732.99" y1="499.09" x2="-6933.10" y2="1754" stroke="#d3ccc5" stroke-width="1.0"/><line x1="-696.46" y1="499.09" x2="-6787.80" y2="1754" stroke="#d3ccc5" stroke-width="1.0"/><line x1="-659.94" y1="499.09" x2="-6642.50" y2="1754" stroke="#d3ccc5" stroke-width="1.0"/><line x1="-623.41" y1="499.09" x2="-6497.20" y2="1754" stroke="#d3ccc5" stroke-width="1.0"/><line x1="-586.88" y1="499.09" x2="-6351.90" y2="1754" stroke="#d3ccc5" stroke-width="1.0"/><line x1="-550.36" y1="499.09" x2="-6206.60" y2="1754" stroke="#d3ccc5" stroke-width="1.0"/><line x1="-513.83" y1="499.09" x2="-6061.30" y2="1754" stroke="#d3ccc5" stroke-width="1.0"/><line x1="-477.31" y1="499.09" x2="-5916.00" y2="1754" stroke="#d3ccc5" stroke-width="1.0"/><line x1="-440.78" y1="499.09" x2="-5770.70" y2="1754" stroke="#d3ccc5" stroke-width="1.0"/><line x1="-404.25" y1="499.09" x2="-5625.40" y2="1754" stroke="#d3ccc5" stroke-width="1.0"/><line x1="-367.73" y1="499.09" x2="-5480.10" y2="1754" stroke="#d3ccc5" stroke-width="1.0"/><line x1="-331.20" y1="499.09" x2="-5334.80" y2="1754" stroke="#d3ccc5" stroke-width="1.0"/><line x1="-294.68" y1="499.09" x2="-5189.50" y2="1754" stroke="#d3ccc5" stroke-width="1.0"/><line x1="-258.15" y1="499.09" x2="-5044.20" y2="1754" stroke="#d3ccc5" stroke-width="1.0"/><line x1="-221.62" y1="499.09" x2="-4898.90" y2="1754" stroke="#d3ccc5" stroke-width="1.0"/><line x1="-185.10" y1="499.09" x2="-4753.60" y2="1754" stroke="#d3ccc5" stroke-width="1.0"/><line x1="-148.57" y1="499.09" x2="-4608.30" y2="1754" stroke="#d3ccc5" stroke-width="1.0"/><line x1="-112.04" y1="499.09" x2="-4463.00" y2="1754" stroke="#d3ccc5" stroke-width="1.0"/><line x1="-75.52" y1="499.09" x2="-4317.70" y2="1754" stroke="#d3ccc5" stroke-width="1.0"/><line x1="-38.99" y1="499.09" x2="-4172.40" y2="1754" stroke="#d3ccc5" stroke-width="1.0"/><line x1="-2.47" y1="499.09" x2="-4027.10" y2="1754" stroke="#d3ccc5" stroke-width="1.0"/><line x1="34.06" y1="499.09" x2="-3881.80" y2="1754" stroke="#d3ccc5" stroke-width="1.0"/><line x1="70.59" y1="499.09" x2="-3736.50" y2="1754" stroke="#d3ccc5" stroke-width="1.0"/><line x1="107.11" y1="499.09" x2="-3591.20" y2="1754" stroke="#d3ccc5" stroke-width="1.0"/><line x1="143.64" y1="499.09" x2="-3445.90" y2="1754" stroke="#d3ccc5" stroke-width="1.0"/><line x1="180.16" y1="499.09" x2="-3300.60" y2="1754" stroke="#d3ccc5" stroke-width="1.0"/><line x1="216.69" y1="499.09" x2="-3155.30" y2="1754" stroke="#d3ccc5" stroke-width="1.0"/><line x1="253.22" y1="499.09" x2="-3010.00" y2="1754" stroke="#d3ccc5" stroke-width="1.0"/><line x1="289.74" y1="499.09" x2="-2864.70" y2="1754" stroke="#d3ccc5" stroke-width="1.0"/><line x1="326.27" y1="499.09" x2="-2719.40" y2="1754" stroke="#d3ccc5" stroke-width="1.0"/><line x1="362.79" y1="499.09" x2="-2574.10" y2="1754" stroke="#d3ccc5" stroke-width="1.0"/><line x1="399.32" y1="499.09" x2="-2428.80" y2="1754" stroke="#d3ccc5" stroke-width="1.0"/><line x1="435.85" y1="499.09" x2="-2283.50" y2="1754" stroke="#d3ccc5" stroke-width="1.0"/><line x1="472.37" y1="499.09" x2="-2138.20" y2="1754" stroke="#d3ccc5" stroke-width="1.0"/><line x1="508.90" y1="499.09" x2="-1992.90" y2="1754" stroke="#d3ccc5" stroke-width="1.0"/><line x1="545.43" y1="499.09" x2="-1847.60" y2="1754" stroke="#d3ccc5" stroke-width="1.0"/><line x1="581.95" y1="499.09" x2="-1702.30" y2="1754" stroke="#d3ccc5" stroke-width="1.0"/><line x1="618.48" y1="499.09" x2="-1557.00" y2="1754" stroke="#d3ccc5" stroke-width="1.0"/><line x1="655.00" y1="499.09" x2="-1411.70" y2="1754" stroke="#d3ccc5" stroke-width="1.0"/><line x1="691.53" y1="499.09" x2="-1266.40" y2="1754" stroke="#d3ccc5" stroke-width="1.0"/><line x1="728.06" y1="499.09" x2="-1121.10" y2="1754" stroke="#d3ccc5" stroke-width="1.0"/><line x1="764.58" y1="499.09" x2="-975.80" y2="1754" stroke="#d3ccc5" stroke-width="1.0"/><line x1="801.11" y1="499.09" x2="-830.50" y2="1754" stroke="#d3ccc5" stroke-width="1.0"/><line x1="837.63" y1="499.09" x2="-685.20" y2="1754" stroke="#d3ccc5" stroke-width="1.0"/><line x1="874.16" y1="499.09" x2="-539.90" y2="1754" stroke="#d3ccc5" stroke-width="1.0"/><line x1="910.69" y1="499.09" x2="-394.60" y2="1754" stroke="#d3ccc5" stroke-width="1.0"/><line x1="947.21" y1="499.09" x2="-249.30" y2="1754" stroke="#d3ccc5" stroke-width="1.0"/><line x1="983.74" y1="499.09" x2="-104.00" y2="1754" stroke="#d3ccc5" stroke-width="1.0"/><line x1="1020.26" y1="499.09" x2="41.30" y2="1754" stroke="#d3ccc5" stroke-width="1.0"/><line x1="1056.79" y1="499.09" x2="186.60" y2="1754" stroke="#d3ccc5" stroke-width="1.0"/><line x1="1093.32" y1="499.09" x2="331.90" y2="1754" stroke="#d3ccc5" stroke-width="1.0"/><line x1="1129.84" y1="499.09" x2="477.20" y2="1754" stroke="#d3ccc5" stroke-width="1.0"/><line x1="1166.37" y1="499.09" x2="622.50" y2="1754" stroke="#d3ccc5" stroke-width="1.0"/><line x1="1202.90" y1="499.09" x2="767.80" y2="1754" stroke="#d3ccc5" stroke-width="1.0"/><line x1="1239.42" y1="499.09" x2="913.10" y2="1754" stroke="#d3ccc5" stroke-width="1.0"/><line x1="1275.95" y1="499.09" x2="1058.40" y2="1754" stroke="#d3ccc5" stroke-width="1.0"/><line x1="1312.47" y1="499.09" x2="1203.70" y2="1754" stroke="#d3ccc5" stroke-width="1.0"/><line x1="1385.53" y1="499.09" x2="1494.30" y2="1754" stroke="#d3ccc5" stroke-width="1.0"/><line x1="1422.05" y1="499.09" x2="1639.60" y2="1754" stroke="#d3ccc5" stroke-width="1.0"/><line x1="1458.58" y1="499.09" x2="1784.90" y2="1754" stroke="#d3ccc5" stroke-width="1.0"/><line x1="1495.10" y1="499.09" x2="1930.20" y2="1754" stroke="#d3ccc5" stroke-width="1.0"/><line x1="1531.63" y1="499.09" x2="2075.50" y2="1754" stroke="#d3ccc5" stroke-width="1.0"/><line x1="1568.16" y1="499.09" x2="2220.80" y2="1754" stroke="#d3ccc5" stroke-width="1.0"/><line x1="1604.68" y1="499.09" x2="2366.10" y2="1754" stroke="#d3ccc5" stroke-width="1.0"/><line x1="1641.21" y1="499.09" x2="2511.40" y2="1754" stroke="#d3ccc5" stroke-width="1.0"/><line x1="1677.74" y1="499.09" x2="2656.70" y2="1754" stroke="#d3ccc5" stroke-width="1.0"/><line x1="1714.26" y1="499.09" x2="2802.00" y2="1754" stroke="#d3ccc5" stroke-width="1.0"/><line x1="1750.79" y1="499.09" x2="2947.30" y2="1754" stroke="#d3ccc5" stroke-width="1.0"/><line x1="1787.31" y1="499.09" x2="3092.60" y2="1754" stroke="#d3ccc5" stroke-width="1.0"/><line x1="1823.84" y1="499.09" x2="3237.90" y2="1754" stroke="#d3ccc5" stroke-width="1.0"/><line x1="1860.37" y1="499.09" x2="3383.20" y2="1754" stroke="#d3ccc5" stroke-width="1.0"/><line x1="1896.89" y1="499.09" x2="3528.50" y2="1754" stroke="#d3ccc5" stroke-width="1.0"/><line x1="1933.42" y1="499.09" x2="3673.80" y2="1754" stroke="#d3ccc5" stroke-width="1.0"/><line x1="1969.94" y1="499.09" x2="3819.10" y2="1754" stroke="#d3ccc5" stroke-width="1.0"/><line x1="2006.47" y1="499.09" x2="3964.40" y2="1754" stroke="#d3ccc5" stroke-width="1.0"/><line x1="2043.00" y1="499.09" x2="4109.70" y2="1754" stroke="#d3ccc5" stroke-width="1.0"/><line x1="2079.52" y1="499.09" x2="4255.00" y2="1754" stroke="#d3ccc5" stroke-width="1.0"/><line x1="2116.05" y1="499.09" x2="4400.30" y2="1754" stroke="#d3ccc5" stroke-width="1.0"/><line x1="2152.57" y1="499.09" x2="4545.60" y2="1754" stroke="#d3ccc5" stroke-width="1.0"/><line x1="2189.10" y1="499.09" x2="4690.90" y2="1754" stroke="#d3ccc5" stroke-width="1.0"/><line x1="2225.63" y1="499.09" x2="4836.20" y2="1754" stroke="#d3ccc5" stroke-width="1.0"/><line x1="2262.15" y1="499.09" x2="4981.50" y2="1754" stroke="#d3ccc5" stroke-width="1.0"/><line x1="2298.68" y1="499.09" x2="5126.80" y2="1754" stroke="#d3ccc5" stroke-width="1.0"/><line x1="2335.21" y1="499.09" x2="5272.10" y2="1754" stroke="#d3ccc5" stroke-width="1.0"/><line x1="2371.73" y1="499.09" x2="5417.40" y2="1754" stroke="#d3ccc5" stroke-width="1.0"/><line x1="2408.26" y1="499.09" x2="5562.70" y2="1754" stroke="#d3ccc5" stroke-width="1.0"/><line x1="2444.78" y1="499.09" x2="5708.00" y2="1754" stroke="#d3ccc5" stroke-width="1.0"/><line x1="2481.31" y1="499.09" x2="5853.30" y2="1754" stroke="#d3ccc5" stroke-width="1.0"/><line x1="2517.84" y1="499.09" x2="5998.60" y2="1754" stroke="#d3ccc5" stroke-width="1.0"/><line x1="2554.36" y1="499.09" x2="6143.90" y2="1754" stroke="#d3ccc5" stroke-width="1.0"/><line x1="2590.89" y1="499.09" x2="6289.20" y2="1754" stroke="#d3ccc5" stroke-width="1.0"/><line x1="2627.41" y1="499.09" x2="6434.50" y2="1754" stroke="#d3ccc5" stroke-width="1.0"/><line x1="2663.94" y1="499.09" x2="6579.80" y2="1754" stroke="#d3ccc5" stroke-width="1.0"/><line x1="2700.47" y1="499.09" x2="6725.10" y2="1754" stroke="#d3ccc5" stroke-width="1.0"/><line x1="2736.99" y1="499.09" x2="6870.40" y2="1754" stroke="#d3ccc5" stroke-width="1.0"/><line x1="2773.52" y1="499.09" x2="7015.70" y2="1754" stroke="#d3ccc5" stroke-width="1.0"/><line x1="2810.04" y1="499.09" x2="7161.00" y2="1754" stroke="#d3ccc5" stroke-width="1.0"/><line x1="2846.57" y1="499.09" x2="7306.30" y2="1754" stroke="#d3ccc5" stroke-width="1.0"/><line x1="2883.10" y1="499.09" x2="7451.60" y2="1754" stroke="#d3ccc5" stroke-width="1.0"/><line x1="2919.62" y1="499.09" x2="7596.90" y2="1754" stroke="#d3ccc5" stroke-width="1.0"/><line x1="2956.15" y1="499.09" x2="7742.20" y2="1754" stroke="#d3ccc5" stroke-width="1.0"/><line x1="2992.68" y1="499.09" x2="7887.50" y2="1754" stroke="#d3ccc5" stroke-width="1.0"/><line x1="3029.20" y1="499.09" x2="8032.80" y2="1754" stroke="#d3ccc5" stroke-width="1.0"/><line x1="3065.73" y1="499.09" x2="8178.10" y2="1754" stroke="#d3ccc5" stroke-width="1.0"/><line x1="3102.25" y1="499.09" x2="8323.40" y2="1754" stroke="#d3ccc5" stroke-width="1.0"/><line x1="3138.78" y1="499.09" x2="8468.70" y2="1754" stroke="#d3ccc5" stroke-width="1.0"/><line x1="3175.31" y1="499.09" x2="8614.00" y2="1754" stroke="#d3ccc5" stroke-width="1.0"/><line x1="3211.83" y1="499.09" x2="8759.30" y2="1754" stroke="#d3ccc5" stroke-width="1.0"/><line x1="3248.36" y1="499.09" x2="8904.60" y2="1754" stroke="#d3ccc5" stroke-width="1.0"/><line x1="3284.88" y1="499.09" x2="9049.90" y2="1754" stroke="#d3ccc5" stroke-width="1.0"/><line x1="3321.41" y1="499.09" x2="9195.20" y2="1754" stroke="#d3ccc5" stroke-width="1.0"/><line x1="3357.94" y1="499.09" x2="9340.50" y2="1754" stroke="#d3ccc5" stroke-width="1.0"/><line x1="3394.46" y1="499.09" x2="9485.80" y2="1754" stroke="#d3ccc5" stroke-width="1.0"/><line x1="3430.99" y1="499.09" x2="9631.10" y2="1754" stroke="#d3ccc5" stroke-width="1.0"/><line x1="3467.51" y1="499.09" x2="9776.40" y2="1754" stroke="#d3ccc5" stroke-width="1.0"/><line x1="3504.04" y1="499.09" x2="9921.70" y2="1754" stroke="#d3ccc5" stroke-width="1.0"/><line x1="3540.57" y1="499.09" x2="10067.00" y2="1754" stroke="#d3ccc5" stroke-width="1.0"/><line x1="1349.0" y1="499.09" x2="1349.0" y2="956" stroke="#d3ccc5" stroke-width="1.6"/><line x1="1349.0" y1="956" x2="1349.0" y2="1560" stroke="#dcd6cf" stroke-width="2.6"/><line x1="1349.0" y1="1560" x2="1349.0" y2="1754" stroke="#d8d4cf" stroke-width="5"/><line x1="654" y1="955.5" x2="2046" y2="955.5" stroke="#e2ddd6" stroke-width="1.8"/><line x1="1057" y1="78" x2="1340.5" y2="932" stroke="#c9e8e2" stroke-width="1.1"/><line x1="1643" y1="78" x2="1359.3" y2="932" stroke="#c9e8e2" stroke-width="1.1"/><defs>
<linearGradient id="cuffL" x1="0" y1="0" x2="0.3" y2="1"><stop offset="0" stop-color="#a6ddd6"/><stop offset="0.45" stop-color="#9aa4e4"/><stop offset="0.75" stop-color="#8f78d6"/><stop offset="1" stop-color="#c56cc8"/></linearGradient>
<linearGradient id="pocket" x1="0" y1="0" x2="1" y2="0"><stop offset="0" stop-color="#d2e49c"/><stop offset="0.12" stop-color="#c07ad0"/><stop offset="0.35" stop-color="#9b8fe0"/><stop offset="0.6" stop-color="#a2d6dc"/><stop offset="0.85" stop-color="#b6e2b8"/><stop offset="1" stop-color="#dde69a"/></linearGradient>
<linearGradient id="body" x1="0" y1="0" x2="1" y2="0"><stop offset="0" stop-color="#c9c6c3"/><stop offset="0.2" stop-color="#e2dfdb"/><stop offset="0.8" stop-color="#e2dfdb"/><stop offset="1" stop-color="#c9c6c3"/></linearGradient>
<linearGradient id="pants" x1="0" y1="0" x2="1" y2="0"><stop offset="0" stop-color="#cac8c5"/><stop offset="0.25" stop-color="#dedcd8"/><stop offset="0.5" stop-color="#d2d0cc"/><stop offset="0.75" stop-color="#dedcd8"/><stop offset="1" stop-color="#cac8c5"/></linearGradient>
<filter id="blur4" x="-20%" y="-20%" width="140%" height="140%"><feGaussianBlur stdDeviation="4"/></filter>
<radialGradient id="face" cx="0.5" cy="0.5" r="0.62"><stop offset="0" stop-color="#efe3dc"/><stop offset="0.7" stop-color="#e6d2c9"/><stop offset="1" stop-color="#d1b2a6"/></radialGradient>
</defs><polygon points="923.0,330.0 935.0,327.0 960.0,326.0 990.0,324.0 1026.0,323.0 1026.0,346.0 1005.0,347.0 990.0,351.0 968.0,350.0 958.0,345.0 935.0,338.0 923.0,335.0" fill="#cbc6dc" /><polygon points="1777.0,330.0 1765.0,327.0 1740.0,326.0 1710.0,324.0 1674.0,323.0 1674.0,346.0 1695.0,347.0 1710.0,351.0 1732.0,350.0 1742.0,345.0 1765.0,338.0 1777.0,335.0" fill="#cbc6dc" /><polygon points="1024.0,322.0 1045.0,318.0 1045.0,350.0 1024.0,349.0" fill="#dcd8d4" /><polygon points="1676.0,322.0 1655.0,318.0 1655.0,350.0 1676.0,349.0" fill="#dcd8d4" /><clipPath id="bodyclip"><polygon points="1350.0,330.0 1286.0,319.0 1264.0,320.0 1247.0,317.0 1203.0,313.6 1138.0,312.5 1106.0,309.0 1099.0,373.0 1138.0,375.0 1182.0,384.0 1221.0,401.0 1242.0,421.0 1257.0,445.0 1266.0,464.0 1270.5,497.0 1271.0,562.0 1350.0,562.0 1350.0,562.0 1429.0,562.0 1429.5,497.0 1434.0,464.0 1443.0,445.0 1458.0,421.0 1479.0,401.0 1518.0,384.0 1562.0,375.0 1601.0,373.0 1594.0,309.0 1562.0,312.5 1497.0,313.6 1453.0,317.0 1436.0,320.0 1414.0,319.0 1350.0,330.0"/></clipPath><polygon points="1350.0,330.0 1286.0,319.0 1264.0,320.0 1247.0,317.0 1203.0,313.6 1138.0,312.5 1106.0,309.0 1099.0,373.0 1138.0,375.0 1182.0,384.0 1221.0,401.0 1242.0,421.0 1257.0,445.0 1266.0,464.0 1270.5,497.0 1271.0,562.0 1350.0,562.0 1350.0,562.0 1429.0,562.0 1429.5,497.0 1434.0,464.0 1443.0,445.0 1458.0,421.0 1479.0,401.0 1518.0,384.0 1562.0,375.0 1601.0,373.0 1594.0,309.0 1562.0,312.5 1497.0,313.6 1453.0,317.0 1436.0,320.0 1414.0,319.0 1350.0,330.0" fill="#dfdcd8" /><g clip-path="url(#bodyclip)"><g filter="url(#blur4)" opacity="0.55"><path d="M1110 372 L1182 386 L1221 403 L1244 424 L1258 448 L1268 470 L1270 540" stroke="#8f8d8b" stroke-width="16" fill="none"/><path d="M1590 372 L1518 386 L1479 403 L1456 424 L1442 448 L1432 470 L1430 540" stroke="#8f8d8b" stroke-width="16" fill="none"/><path d="M1221 400 Q1240 350 1262 322" stroke="#a3a19f" stroke-width="9" fill="none" opacity="0.55"/><path d="M1479 400 Q1460 350 1438 322" stroke="#a3a19f" stroke-width="9" fill="none" opacity="0.55"/><path d="M1150 340 Q1190 360 1215 395" stroke="#a8a6a4" stroke-width="14" fill="none" opacity="0.5"/><path d="M1550 340 Q1510 360 1485 395" stroke="#a8a6a4" stroke-width="14" fill="none" opacity="0.5"/><path d="M1132 322 L1132 372" stroke="#a09e9c" stroke-width="8" fill="none" opacity="0.6"/><path d="M1568 322 L1568 372" stroke="#a09e9c" stroke-width="8" fill="none" opacity="0.6"/></g></g><polygon points="1043.0,312.0 1058.0,306.0 1093.0,305.0 1106.0,309.0 1138.0,375.0 1099.0,373.0 1058.0,360.0 1043.0,345.0" fill="url(#cuffL)" /><polygon points="1657.0,312.0 1642.0,306.0 1607.0,305.0 1594.0,309.0 1562.0,375.0 1601.0,373.0 1642.0,360.0 1657.0,345.0" fill="url(#cuffL)" /><polygon points="1259.0,458.0 1268.0,460.0 1316.0,488.0 1384.0,488.0 1432.0,460.0 1441.0,458.0 1429.0,562.0 1271.0,562.0" fill="url(#pocket)" /><path d="M1312 489 Q1296 520 1288 555 M1388 489 Q1404 520 1412 555" stroke="#8a7fb8" stroke-width="2.5" opacity="0.45" fill="none"/><polygon points="1274.0,574.0 1426.0,574.0 1424.0,660.0 1418.0,760.0 1411.0,887.0 1372.0,887.0 1350.0,655.0 1328.0,887.0 1289.0,887.0 1282.0,760.0 1276.0,660.0" fill="url(#pants)" /><path d="M1350 600 L1350 652" stroke="#b5b3b0" stroke-width="1.5"/><path d="M1271 557 L1429 557 L1429 577 Q1428 589 1350 591 Q1272 589 1272 577 Z" fill="#dcd9d5"/><path d="M1273 582 Q1276 590 1350 592 Q1424 590 1428 582" stroke="#a3a09d" stroke-width="2" fill="none"/><polygon points="1290.0,885.0 1328.0,885.0 1326.0,900.0 1292.0,900.0" fill="#c3c8e0" /><polygon points="1410.0,885.0 1372.0,885.0 1374.0,900.0 1408.0,900.0" fill="#c3c8e0" /><path d="M1292 897 Q1307 893 1322 897 Q1331 905 1332 925 Q1334 960 1332 985 Q1328 1003 1306 1004 Q1283 1003 1280 985 Q1278 955 1280 925 Q1282 905 1292 897 Z" fill="#dcdad7"/><path d="M1292 897 Q1307 893 1322 897 Q1331 905 1332 925 Q1334 960 1332 985 Q1328 1003 1306 1004 Q1283 1003 1280 985 Q1278 955 1280 925 Q1282 905 1292 897 Z" fill="#dcdad7" transform="translate(2700 0) scale(-1 1)"/><path d="M1284 978 Q1306 990 1330 978" stroke="#bdbbb7" stroke-width="2.5" fill="none"/><path d="M1416 978 Q1394 990 1370 978" stroke="#bdbbb7" stroke-width="2.5" fill="none"/><path d="M1293 915 Q1306 925 1320 915 M1294 935 Q1306 944 1320 935" stroke="#cdcbc7" stroke-width="2.2" fill="none"/><path d="M1407 915 Q1394 925 1380 915 M1406 935 Q1394 944 1380 935" stroke="#cdcbc7" stroke-width="2.2" fill="none"/><polygon points="1283.0,322.0 1288.0,310.0 1293.0,296.0 1312.0,289.0 1330.0,291.0 1350.0,322.0 1370.0,291.0 1390.0,289.0 1408.0,296.0 1414.0,310.0 1419.0,322.0 1356.0,357.0" fill="#d3d0cd" /><polygon points="1294.0,297.0 1312.0,289.0 1328.0,291.0 1338.0,310.0 1350.0,333.0 1332.0,322.0 1300.0,312.0" fill="#b87ad2" /><polygon points="1406.0,297.0 1390.0,289.0 1374.0,291.0 1364.0,308.0 1352.0,333.0 1372.0,322.0 1404.0,312.0" fill="#d8e6a8" /><polygon points="1327.0,266.0 1376.0,266.0 1380.0,300.0 1352.0,334.0 1324.0,300.0" fill="#dcc0b5" /><ellipse cx="1311" cy="237" rx="5.5" ry="14.5" fill="#d9b8ac"/><ellipse cx="1389.5" cy="237" rx="5.5" ry="14.5" fill="#d9b8ac"/><path d="M1314 198 L1315 235 Q1318 258 1326 268 Q1340 284 1350 285 Q1362 284 1374 270 Q1383 258 1386 235 L1387 198 Q1350 178 1314 198 Z" fill="url(#face)"/><path d="M1340 257 Q1350 254 1362 257 Q1351 265 1340 257 Z" fill="#cf9f9c"/><path d="M1344 243 Q1351 247 1358 243" stroke="#c9aaa0" stroke-width="2" fill="none"/><path d="M1311.7 213.5 L1306.5 195 L1309 182 L1311.7 172.8 L1322 166 L1330 160 L1336.7 155 L1340 160 L1350 157.5 L1361.6 161 L1381 170 L1388 179.4 L1391 195 L1390.5 205 L1383 202 L1381 195 L1368 188.6 L1352 191 L1340 197 L1332.7 201.7 L1325 206 L1318 212 Z" fill="#1c1c1c"/><defs><linearGradient id="lens" x1="0" y1="0" x2="0" y2="1"><stop offset="0" stop-color="#6f6862"/><stop offset="1" stop-color="#b5aca6"/></linearGradient></defs><path d="M1318 213.5 L1347 212.5 Q1349 226 1343 234 Q1337 239.5 1329 238 Q1320 233 1318 222 Z" fill="url(#lens)" opacity="0.85" stroke="#d2d2d2" stroke-width="1.1" stroke-dasharray="2 1"/><path d="M1382.6 213.5 L1353.6 212.5 Q1351.6 226 1357.6 234 Q1363.6 239.5 1371.6 238 Q1380.6 233 1382.6 222 Z" fill="url(#lens)" opacity="0.85" stroke="#d2d2d2" stroke-width="1.1" stroke-dasharray="2 1"/><path d="M1313 221 L1318 219 M1382.6 219 L1388 221 M1318 211.5 L1383 211.5" stroke="#b0b0b0" stroke-width="1.3"/><ellipse cx="1333" cy="223" rx="5" ry="3.5" fill="#2e2a28" opacity="0.75"/><ellipse cx="1367.5" cy="223" rx="5" ry="3.5" fill="#2e2a28" opacity="0.75"/><defs><linearGradient id="logoG" x1="0" y1="0" x2="1" y2="1"><stop offset="0" stop-color="#8ab8ef"/><stop offset="0.5" stop-color="#9c7fe6"/><stop offset="1" stop-color="#b36fd8"/></linearGradient></defs><g opacity="0.75" fill="none" stroke="url(#logoG)" stroke-width="4.3" stroke-linejoin="miter"><path d="M1353.0 401.0 L1376.4 414.5 L1376.4 441.5 L1353.0 455.0 L1329.6 441.5 L1329.6 414.5 Z"/><path d="M1353.0 428.0 L1376.4 414.5 M1353.0 428.0 L1353.0 455.0 M1353.0 428.0 L1329.6 414.5 M1353.0 410.5 L1353.0 401.0 M1368.2 436.8 L1376.4 441.5 M1337.8 436.8 L1329.6 441.5 "/></g><g opacity="0.45" fill="none" stroke="url(#logoG)" stroke-width="3.2" stroke-linejoin="miter"><path d="M1163.0 312.0 L1180.3 322.0 L1180.3 342.0 L1163.0 352.0 L1145.7 342.0 L1145.7 322.0 Z"/><path d="M1163.0 332.0 L1180.3 322.0 M1163.0 332.0 L1163.0 352.0 M1163.0 332.0 L1145.7 322.0 M1163.0 319.0 L1163.0 312.0 M1174.3 338.5 L1180.3 342.0 M1151.7 338.5 L1145.7 342.0 "/></g><g opacity="0.45" fill="none" stroke="url(#logoG)" stroke-width="3.2" stroke-linejoin="miter"><path d="M1537.0 312.0 L1554.3 322.0 L1554.3 342.0 L1537.0 352.0 L1519.7 342.0 L1519.7 322.0 Z"/><path d="M1537.0 332.0 L1554.3 322.0 M1537.0 332.0 L1537.0 352.0 M1537.0 332.0 L1519.7 322.0 M1537.0 319.0 L1537.0 312.0 M1548.3 338.5 L1554.3 342.0 M1525.7 338.5 L1519.7 342.0 "/></g><path d="M1329 323 L1326 436 M1375 319 L1377 420" stroke="#a6a6a6" stroke-width="3"/><circle cx="1329" cy="325" r="3" fill="#333"/><circle cx="1375" cy="321" r="3" fill="#333"/><g fill="#9bd29a"><polygon points="1470,540 1487,553 1474,569 1456,556"/><polygon points="1456,589 1474,576 1487,592 1470,607"/><polygon points="1496,541 1512,551 1500,556"/><polygon points="1500,585 1512,592 1496,603"/><rect x="1480" y="553" width="22" height="32" rx="4" fill="#85c486"/><circle cx="1503" cy="569" r="16" fill="#a8d9a6"/></g><rect x="1342" y="930" width="22" height="70" fill="#a9d9a1"/><rect x="1348" y="859" width="4.5" height="88" fill="#3f9f4f"/><polygon points="1350,831 1338,860 1362,860" fill="#5bd05f"/><rect x="1339" y="942" width="22" height="11" fill="#dfe4dd"/><rect x="1339" y="953" width="22" height="19" fill="#a7aca5"/><rect x="1361" y="954.5" width="100" height="2.8" fill="#a3443d"/><polygon points="1459,945 1488,956 1459,967" fill="#e0594f"/><rect x="1348" y="961" width="4.5" height="48" fill="#5a66d0"/><path d="M1339 1013 Q1350 1003 1361 1013 Q1361 1022 1350 1030 Q1339 1022 1339 1013 Z" fill="#2f35c2"/><rect x="1407" y="887" width="23" height="20.5" fill="#a5a03e"/><rect x="1407" y="984" width="23.5" height="13" fill="#d570e2"/></svg>
<div class="t" style="left:674.0px;top:100.4px;font-size:29.07px;color:rgba(255,255,255,0.58);letter-spacing:0.69px;">Triangles</div>
<div class="t" style="left:946.0px;top:100.4px;font-size:29.07px;color:rgba(255,255,255,0.62);letter-spacing:0.79px;">14085</div>
<div class="t" style="left:675.0px;top:175.4px;font-size:29.07px;color:rgba(255,255,255,0.58);transform:scaleX(0.9657);transform-origin:0.0px 0;">BlendShapes</div>
<div class="t" style="left:945.0px;top:175.4px;font-size:29.07px;color:rgba(255,255,255,0.62);">0</div>
<div class="t" style="left:672.0px;top:249.4px;font-size:29.07px;color:rgba(255,255,255,0.58);">Joints</div>
<div class="t" style="left:946.0px;top:249.4px;font-size:29.07px;color:rgba(255,255,255,0.62);transform:scaleX(0.9899);transform-origin:0.0px 0;">57</div>
<div class="a" style="left:1876.0px;top:129.0px;width:100.0px;height:51.0px;background:#5a78ad;border:1.5px solid #b4b8c2;"></div>
<div class="a" style="left:1876.0px;top:178.5px;width:100.0px;height:88.0px;background:#25457a;border:1.5px solid #b4b8c2;"></div>
<div class="t" style="left:1908.5px;top:146.2px;font-size:21.08px;color:#e8eaf0;transform:scaleX(1.75);transform-origin:left">Up</div>
<div class="t" style="left:1908.0px;top:210.2px;font-size:36.34px;color:#b9bdc8;letter-spacing:0.79px;">Forwar</div>
<svg class="a" style="left:1856px;top:163px;" width="22" height="30" viewBox="0 0 22 30"><path d="M3 8l14 10L3 27M18 2v26" stroke="#a9a9ad" stroke-width="2" fill="none"/></svg>
<svg class="a" style="left:1986px;top:257px;" width="30" height="30" viewBox="0 0 30 30"><path d="M3 14L15 3l12 11v13a2 2 0 0 1-2 2H5a2 2 0 0 1-2-2z" fill="#a7a8bc"/><path d="M11 29V17h8v12" fill="#2e3140"/><path d="M13.5 29V19.5h3V29" fill="#a7a8bc"/></svg>
<div class="t" style="left:683.5px;top:21.7px;font-size:34.88px;color:#a9acb2;transform:scaleX(0.8860);transform-origin:0.0px 0;">2D</div>
<div class="t" style="left:786.0px;top:22.0px;font-size:34.88px;color:#ffffff;transform:scaleX(0.9309);transform-origin:0.0px 0;">3D</div>
<div class="a" style="left:786.0px;top:65.0px;width:42.0px;height:3.5px;background:#ffffff;border-radius:1px;"></div>
<div class="t" style="left:890.0px;top:22.0px;font-size:34.88px;color:#a9acb2;letter-spacing:-0.20px;">Workflow</div>
<div class="a" style="left:1822.0px;top:18.0px;width:188.0px;height:48.0px;background:#25272d;border-radius:9px;"></div>
<div class="t" style="left:1873.0px;top:28.1px;font-size:27.62px;color:#ffffff;transform:scaleX(0.9161);transform-origin:0.0px 0;">World</div>
<svg class="a" style="left:1979px;top:36px;" width="18" height="14" viewBox="0 0 18 14"><path d="M3 4l6 6 6-6" stroke="#fff" stroke-width="2.6" fill="none" stroke-linecap="round"/></svg>
<div class="a" style="left:2052.0px;top:0.0px;width:722.0px;height:1754.0px;background:#2f313c;"></div>
<div class="t" style="left:2072.0px;top:21.9px;font-size:32.70px;color:#fff;-webkit-text-stroke:0.7px #fff;letter-spacing:0.51px;">Components</div>
<svg class="a" style="left:2657px;top:19px;" width="30" height="30" viewBox="0 0 30 30"><path d="M23.5 9.5A11 11 0 1 1 18.5 4.6" fill="none" stroke="#a9abb3" stroke-width="2.6" stroke-linecap="round"/><path d="M14.5 15.5L25.5 3.5" stroke="#a9abb3" stroke-width="2.6" stroke-linecap="round"/></svg>
<svg class="a" style="left:2722px;top:19px;" width="30" height="30" viewBox="0 0 30 30"><path d="M3 19h7v7M26 10h-7V3" stroke="#a9abb3" stroke-width="2.6" fill="none"/></svg>
<div class="a" style="left:2759.5px;top:77.0px;width:6.5px;height:917.0px;background:#76787f;"></div>
<div class="a" style="left:2771.0px;top:0.0px;width:3.0px;height:1754.0px;background:#1f232b;"></div>
<div class="a" style="left:2070.0px;top:78.0px;width:683.0px;height:289.6px;background:#3f424f;border-radius:12px;"></div>
<svg class="a" style="left:2094px;top:105.5px;" width="18" height="15" viewBox="0 0 18 15"><path d="M0 0.5h18l-9 14z" fill="#a6a8ae"/></svg>
<svg class="a" style="left:2132px;top:96px;" width="32" height="32" viewBox="0 0 32 32"><path d="M16 3v15M16 18L4 29M16 18l12 11" stroke="#8d8d9b" stroke-width="3" fill="none"/><path d="M10 9l6-6 6 6M3 21v8h8M29 21v8h-8" stroke="#8d8d9b" stroke-width="3" fill="none"/></svg>
<div class="t" style="left:2172.0px;top:97.0px;font-size:28.34px;color:#fff;-webkit-text-stroke:0.6px #fff;letter-spacing:0.12px;">3D locs &amp; transform  (1)</div>
<svg class="a" style="left:2598px;top:96px;" width="32" height="32" viewBox="0 0 32 32"><circle cx="15.5" cy="15.5" r="14.5" fill="#6b6d74"/><path d="M11.2 12c0-2.7 1.9-4.3 4.5-4.3 2.7 0 4.5 1.6 4.5 3.9 0 2-1.3 2.8-2.5 3.7-1 .7-1.4 1.2-1.4 2.5v.8" fill="none" stroke="#cfcfd3" stroke-width="2.6" stroke-linecap="round"/><circle cx="16.2" cy="22.8" r="1.6" fill="#cfcfd3"/></svg>
<svg class="a" style="left:2651px;top:97px;" width="30" height="30" viewBox="0 0 30 30"><path d="M23.5 9.5A11 11 0 1 1 18.5 4.6" fill="none" stroke="#a9abb3" stroke-width="2.6" stroke-linecap="round"/><path d="M14.5 15.5L25.5 3.5" stroke="#a9abb3" stroke-width="2.6" stroke-linecap="round"/></svg>
<svg class="a" style="left:2702px;top:96px;" width="32" height="32" viewBox="0 0 32 32"><circle cx="16" cy="16" r="12.3" fill="#8990ac"/><circle cx="16.00" cy="5.40" r="5.6" fill="#8990ac"/><circle cx="25.18" cy="10.70" r="5.6" fill="#8990ac"/><circle cx="25.18" cy="21.30" r="5.6" fill="#8990ac"/><circle cx="16.00" cy="26.60" r="5.6" fill="#8990ac"/><circle cx="6.82" cy="21.30" r="5.6" fill="#8990ac"/><circle cx="6.82" cy="10.70" r="5.6" fill="#8990ac"/><circle cx="16" cy="16" r="5.2" fill="none" stroke="#2c2f3a" stroke-width="2.4"/></svg>
<div class="t" style="left:2104.0px;top:159.8px;font-size:29.80px;color:#fff;transform:scaleX(0.9816);transform-origin:0.0px 0;">Coordinates</div>
<div class="a" style="left:2302.0px;top:150.0px;width:133.0px;height:49.6px;background:#28292f;border-radius:7px;"></div>
<div class="t" style="left:2318.0px;top:162.2px;font-size:26.89px;color:#fff;">0</div>
<div class="t" style="left:2412.0px;top:162.2px;font-size:26.89px;color:#85878e;">X</div>
<div class="a" style="left:2444.0px;top:150.0px;width:131.0px;height:49.6px;background:#28292f;border-radius:7px;"></div>
<div class="t" style="left:2460.0px;top:162.2px;font-size:26.89px;color:#fff;">0</div>
<div class="t" style="left:2552.0px;top:162.2px;font-size:26.89px;color:#85878e;">Y</div>
<div class="a" style="left:2583.0px;top:150.0px;width:131.0px;height:49.6px;background:#28292f;border-radius:7px;"></div>
<div class="t" style="left:2599.0px;top:162.2px;font-size:26.89px;color:#fff;">0</div>
<div class="t" style="left:2691.0px;top:162.2px;font-size:26.89px;color:#85878e;">Z</div>
<div class="t" style="left:2104.0px;top:235.8px;font-size:29.80px;color:#fff;transform:scaleX(0.9797);transform-origin:0.0px 0;">Rotate</div>
<div class="a" style="left:2302.0px;top:226.0px;width:133.0px;height:49.6px;background:#28292f;border-radius:7px;"></div>
<div class="t" style="left:2318.0px;top:238.2px;font-size:26.89px;color:#fff;">0</div>
<div class="t" style="left:2412.0px;top:238.2px;font-size:26.89px;color:#85878e;">X</div>
<div class="a" style="left:2444.0px;top:226.0px;width:131.0px;height:49.6px;background:#28292f;border-radius:7px;"></div>
<div class="t" style="left:2460.0px;top:238.2px;font-size:26.89px;color:#fff;">0</div>
<div class="t" style="left:2552.0px;top:238.2px;font-size:26.89px;color:#85878e;">Y</div>
<div class="a" style="left:2583.0px;top:226.0px;width:131.0px;height:49.6px;background:#28292f;border-radius:7px;"></div>
<div class="t" style="left:2599.0px;top:238.2px;font-size:26.89px;color:#fff;">0</div>
<div class="t" style="left:2691.0px;top:238.2px;font-size:26.89px;color:#85878e;">Z</div>
<div class="t" style="left:2104.0px;top:311.8px;font-size:29.80px;color:#fff;transform:scaleX(0.9393);transform-origin:0.0px 0;">Scale</div>
<div class="a" style="left:2302.0px;top:302.0px;width:133.0px;height:49.6px;background:#28292f;border-radius:7px;"></div>
<div class="t" style="left:2318.0px;top:314.2px;font-size:26.89px;color:#fff;">1</div>
<div class="t" style="left:2412.0px;top:314.2px;font-size:26.89px;color:#85878e;">X</div>
<div class="a" style="left:2444.0px;top:302.0px;width:131.0px;height:49.6px;background:#28292f;border-radius:7px;"></div>
<div class="t" style="left:2460.0px;top:314.2px;font-size:26.89px;color:#fff;">1</div>
<div class="t" style="left:2552.0px;top:314.2px;font-size:26.89px;color:#85878e;">Y</div>
<div class="a" style="left:2583.0px;top:302.0px;width:131.0px;height:49.6px;background:#28292f;border-radius:7px;"></div>
<div class="t" style="left:2599.0px;top:314.2px;font-size:26.89px;color:#fff;">1</div>
<div class="t" style="left:2691.0px;top:314.2px;font-size:26.89px;color:#85878e;">Z</div>
<svg class="a" style="left:2264px;top:314px;" width="30" height="28" viewBox="0 0 30 28"><rect x="2" y="12" width="19" height="14" rx="2.5" fill="#a9a9b4"/><path d="M16 12V8a5 5 0 0 1 10 0v2.5" fill="none" stroke="#a9a9b4" stroke-width="2.8" stroke-linecap="round"/></svg>
<div class="a" style="left:2070.0px;top:388.0px;width:683.0px;height:71.6px;background:#3f424f;border-radius:12px;"></div>
<svg class="a" style="left:2097px;top:415px;" width="15" height="18" viewBox="0 0 15 18"><path d="M0.5 0v18l14-9z" fill="#a6a8ae"/></svg>
<svg class="a" style="left:2133px;top:407px;" width="30" height="30" viewBox="0 0 30 30"><rect x="0" y="0" width="30" height="30" rx="3" fill="#8d8d9b"/><rect x="3.0" y="3.0" width="3" height="3" fill="#3f424f"/><rect x="8.2" y="3.0" width="3" height="3" fill="#3f424f"/><rect x="13.4" y="3.0" width="3" height="3" fill="#3f424f"/><rect x="18.6" y="3.0" width="3" height="3" fill="#3f424f"/><rect x="23.8" y="3.0" width="3" height="3" fill="#3f424f"/><rect x="3.0" y="8.2" width="3" height="3" fill="#3f424f"/><rect x="8.2" y="8.2" width="3" height="3" fill="#3f424f"/><rect x="13.4" y="8.2" width="3" height="3" fill="#3f424f"/><rect x="18.6" y="8.2" width="3" height="3" fill="#3f424f"/><rect x="23.8" y="8.2" width="3" height="3" fill="#3f424f"/><rect x="3.0" y="13.4" width="3" height="3" fill="#3f424f"/><rect x="8.2" y="13.4" width="3" height="3" fill="#3f424f"/><rect x="13.4" y="13.4" width="3" height="3" fill="#3f424f"/><rect x="18.6" y="13.4" width="3" height="3" fill="#3f424f"/><rect x="23.8" y="13.4" width="3" height="3" fill="#3f424f"/><rect x="3.0" y="18.6" width="3" height="3" fill="#3f424f"/><rect x="8.2" y="18.6" width="3" height="3" fill="#3f424f"/><rect x="13.4" y="18.6" width="3" height="3" fill="#3f424f"/><rect x="18.6" y="18.6" width="3" height="3" fill="#3f424f"/><rect x="23.8" y="18.6" width="3" height="3" fill="#3f424f"/><rect x="3.0" y="23.8" width="3" height="3" fill="#3f424f"/><rect x="8.2" y="23.8" width="3" height="3" fill="#3f424f"/><rect x="13.4" y="23.8" width="3" height="3" fill="#3f424f"/><rect x="18.6" y="23.8" width="3" height="3" fill="#3f424f"/><rect x="23.8" y="23.8" width="3" height="3" fill="#3f424f"/></svg>
<div class="t" style="left:2172.0px;top:407.0px;font-size:28.34px;color:#fff;-webkit-text-stroke:0.6px #fff;transform:scaleX(0.9788);transform-origin:0.0px 0;">Mesh  (290)</div>
<svg class="a" style="left:2598px;top:408px;" width="30" height="30" viewBox="0 0 30 30"><path d="M23.5 9.5A11 11 0 1 1 18.5 4.6" fill="none" stroke="#a9abb3" stroke-width="2.6" stroke-linecap="round"/><path d="M14.5 15.5L25.5 3.5" stroke="#a9abb3" stroke-width="2.6" stroke-linecap="round"/></svg>
<svg class="a" style="left:2649px;top:406px;" width="33" height="32" viewBox="0 0 33 32"><rect x="0.5" y="0.5" width="32" height="31" rx="4" fill="#2f67e0"/><path d="M8 16.5l5.5 6L25 9" stroke="#fff" stroke-width="3.4" fill="none" stroke-linecap="round" stroke-linejoin="round"/></svg>
<svg class="a" style="left:2702px;top:406px;" width="32" height="32" viewBox="0 0 32 32"><circle cx="16" cy="16" r="12.3" fill="#8990ac"/><circle cx="16.00" cy="5.40" r="5.6" fill="#8990ac"/><circle cx="25.18" cy="10.70" r="5.6" fill="#8990ac"/><circle cx="25.18" cy="21.30" r="5.6" fill="#8990ac"/><circle cx="16.00" cy="26.60" r="5.6" fill="#8990ac"/><circle cx="6.82" cy="21.30" r="5.6" fill="#8990ac"/><circle cx="6.82" cy="10.70" r="5.6" fill="#8990ac"/><circle cx="16" cy="16" r="5.2" fill="none" stroke="#2c2f3a" stroke-width="2.4"/></svg>
<div class="a" style="left:2070.0px;top:480.5px;width:683.0px;height:70.5px;background:#3f424f;border-radius:12px;"></div>
<svg class="a" style="left:2097px;top:507px;" width="15" height="18" viewBox="0 0 15 18"><path d="M0.5 0v18l14-9z" fill="#a6a8ae"/></svg>
<svg class="a" style="left:2132px;top:498px;" width="32" height="32" viewBox="0 0 32 32"><path d="M16 3v15M16 18L4 29M16 18l12 11" stroke="#8d8d9b" stroke-width="3" fill="none"/><path d="M10 9l6-6 6 6M3 21v8h8M29 21v8h-8" stroke="#8d8d9b" stroke-width="3" fill="none"/></svg>
<div class="t" style="left:2172.0px;top:500.0px;font-size:28.34px;color:#fff;-webkit-text-stroke:0.6px #fff;transform:scaleX(0.9745);transform-origin:0.0px 0;">Layers  (4)</div>
<svg class="a" style="left:2651px;top:499px;" width="30" height="30" viewBox="0 0 30 30"><path d="M23.5 9.5A11 11 0 1 1 18.5 4.6" fill="none" stroke="#a9abb3" stroke-width="2.6" stroke-linecap="round"/><path d="M14.5 15.5L25.5 3.5" stroke="#a9abb3" stroke-width="2.6" stroke-linecap="round"/></svg>
<svg class="a" style="left:2702px;top:498px;" width="32" height="32" viewBox="0 0 32 32"><circle cx="16" cy="16" r="12.3" fill="#8990ac"/><circle cx="16.00" cy="5.40" r="5.6" fill="#8990ac"/><circle cx="25.18" cy="10.70" r="5.6" fill="#8990ac"/><circle cx="25.18" cy="21.30" r="5.6" fill="#8990ac"/><circle cx="16.00" cy="26.60" r="5.6" fill="#8990ac"/><circle cx="6.82" cy="21.30" r="5.6" fill="#8990ac"/><circle cx="6.82" cy="10.70" r="5.6" fill="#8990ac"/><circle cx="16" cy="16" r="5.2" fill="none" stroke="#2c2f3a" stroke-width="2.4"/></svg>
<div class="a" style="left:2063.0px;top:568.0px;width:687.0px;height:1174.0px;background:#3f424f;border-radius:10px;"></div>
<svg class="a" style="left:2088px;top:597px;" width="18" height="15" viewBox="0 0 18 15"><path d="M0 0.5h18l-9 14z" fill="#a6a8ae"/></svg>
<svg class="a" style="left:2127px;top:587px;" width="30" height="33" viewBox="0 0 30 33"><path d="M3 1h16l10 10v19a3 3 0 0 1-3 3H3a3 3 0 0 1-3-3V4a3 3 0 0 1 3-3z" fill="#87878b"/><path d="M20 0l10 10h-10z" fill="#3e414d" opacity="0.35"/><circle cx="14.5" cy="21" r="5" fill="#3e414d"/></svg>
<div class="t" style="left:2170.5px;top:590.0px;font-size:28.34px;color:#fff;-webkit-text-stroke:0.6px #fff;transform:scaleX(0.8662);transform-origin:0.0px 0;">(2)</div>
<div class="t" style="left:2118.0px;top:651.8px;font-size:29.80px;color:#fff;transform:scaleX(0.9441);transform-origin:0.0px 0;">Filename</div>
<div class="a" style="left:2315.7px;top:642.0px;width:386.1px;height:49.5px;background:#30323c;border-radius:8px;"></div>
<div class="t" style="left:2332.0px;top:653.6px;font-size:27.62px;color:#fff;transform:scaleX(0.9255);transform-origin:0.0px 0;">Wolf3D_Body.fmaterial</div>
<div class="t" style="left:2118.0px;top:727.8px;font-size:29.80px;color:#fff;transform:scaleX(0.9392);transform-origin:0.0px 0;">Reso…ndex</div>
<div class="a" style="left:2315.7px;top:718.0px;width:386.1px;height:49.5px;background:#30323c;border-radius:8px;"></div>
<div class="t" style="left:2332.0px;top:729.6px;font-size:27.62px;color:#fff;transform:scaleX(0.9212);transform-origin:0.0px 0;">71ca–4a95–98b0–573c2f7db9f8</div>
<div class="t" style="left:2118.0px;top:803.8px;font-size:29.80px;color:#fff;letter-spacing:-0.17px;">Update time</div>
<div class="a" style="left:2315.7px;top:794.0px;width:386.1px;height:49.5px;background:#30323c;border-radius:8px;"></div>
<div class="t" style="left:2332.0px;top:805.6px;font-size:27.62px;color:#fff;transform:scaleX(0.9476);transform-origin:0.0px 0;">2026/3/5 14:52:27</div>
<div class="t" style="left:2118.0px;top:879.8px;font-size:29.80px;color:#fff;transform:scaleX(0.9580);transform-origin:0.0px 0;">File size</div>
<div class="a" style="left:2315.7px;top:870.0px;width:386.1px;height:49.5px;background:#30323c;border-radius:8px;"></div>
<div class="t" style="left:2332.0px;top:881.6px;font-size:27.62px;color:#fff;transform:scaleX(0.8712);transform-origin:0.0px 0;">1.59 KB</div>
<div class="t" style="left:2118.0px;top:955.8px;font-size:29.80px;color:#fff;transform:scaleX(0.9366);transform-origin:0.0px 0;">Shader</div>
<div class="a" style="left:2315.7px;top:946.0px;width:386.1px;height:49.5px;background:#28292f;border-radius:8px;"></div>
<div class="t" style="left:2336.0px;top:957.6px;font-size:27.62px;color:#fff;transform:scaleX(0.9324);transform-origin:0.0px 0;">lit_opaque[internal]</div>
<svg class="a" style="left:2670px;top:965px;" width="20" height="16" viewBox="0 0 20 16"><path d="M3.5 4l6 6 6-6" stroke="#fff" stroke-width="2.4" fill="none" stroke-linecap="round"/></svg>
<div class="a" style="left:2108.0px;top:1033.5px;width:611.0px;height:2.0px;background:#2b2d36;"></div>
<div class="t" style="left:2108.6px;top:1089.5px;font-size:25.44px;color:#b0b2b8;-webkit-text-stroke:0.5px #b0b2b8;transform:scaleX(0.9702);transform-origin:0.0px 0;">Uniform</div>
<div class="t" style="left:2118.0px;top:1157.5px;font-size:29.80px;color:#fff;">color</div>
<div class="a" style="left:2316.5px;top:1148.6px;width:89.0px;height:48.4px;background:#ffffff;border-radius:7px;"></div>
<div class="a" style="left:2414.0px;top:1148.6px;width:189.0px;height:48.4px;background:#28292f;border-radius:7px;"></div>
<div class="t" style="left:2430.0px;top:1160.9px;font-size:24.71px;color:#fff;letter-spacing:0.87px;">#ffffff</div>
<div class="a" style="left:2612.0px;top:1148.6px;width:89.5px;height:48.4px;background:#28292f;border-radius:7px;"></div>
<div class="t" style="left:2628.5px;top:1160.9px;font-size:24.71px;color:#fff;transform:scaleX(0.8856);transform-origin:0.0px 0;">100</div>
<div class="t" style="left:2671.0px;top:1160.9px;font-size:24.71px;color:#8f9197;">%</div>
<div class="t" style="left:2118.0px;top:1238.4px;font-size:29.80px;color:#fff;">color texture</div>
<svg class="a" style="left:2316px;top:1238px;" width="32" height="32" viewBox="0 0 32 32"><rect x="0.5" y="0.5" width="31" height="31" rx="4" fill="#2f67e0"/><path d="M8 16l5 5.5L24 9" stroke="#fff" stroke-width="3.2" fill="none" stroke-linecap="round" stroke-linejoin="round"/></svg>
<div class="t" style="left:2128.5px;top:1319.4px;font-size:29.80px;color:#fff;">– texture</div>
<div class="a" style="left:2316.5px;top:1310.0px;width:385.0px;height:49.6px;background:#28292f;border-radius:8px;"></div>
<div class="t" style="left:2332.0px;top:1322.1px;font-size:27.62px;color:#fff;transform:scaleX(0.8947);transform-origin:0.0px 0;">Image_2.jpg</div>
<svg class="a" style="left:2669px;top:1322px;" width="26" height="28" viewBox="0 0 26 28"><path d="M2 5h20M8 5V2.5h8V5M4.5 5l1.2 19.5a2 2 0 0 0 2 1.8h8.6a2 2 0 0 0 2-1.8L19.5 5M10 10v11M14 10v11" stroke="#fff" stroke-width="2.3" fill="none" stroke-linecap="round"/></svg>
<div class="t" style="left:2128.5px;top:1395.5px;font-size:29.80px;color:#fff;transform:scaleX(0.9758);transform-origin:0.0px 0;">– UV set</div>
<div class="a" style="left:2316.5px;top:1386.0px;width:385.0px;height:49.0px;background:#28292f;border-radius:8px;"></div>
<div class="t" style="left:2335.6px;top:1397.3px;font-size:27.62px;color:#fff;transform:scaleX(0.8825);transform-origin:0.0px 0;">UV0</div>
<svg class="a" style="left:2670px;top:1404px;" width="20" height="16" viewBox="0 0 20 16"><path d="M3.5 4l6 6 6-6" stroke="#fff" stroke-width="2.4" fill="none" stroke-linecap="round"/></svg>
<div class="t" style="left:2128.5px;top:1476.5px;font-size:29.80px;color:#fff;transform:scaleX(0.9774);transform-origin:0.0px 0;">– pre…iplied</div>
<div class="a" style="left:2316.5px;top:1477.0px;width:31.0px;height:30.0px;background:#8a8996;border-radius:4px;"></div>
<div class="t" style="left:2118.0px;top:1557.8px;font-size:29.80px;color:#fff;transform:scaleX(0.9572);transform-origin:0.0px 0;">metalness</div>
<div class="a" style="left:2321.0px;top:1570.5px;width:284.5px;height:5.0px;background:#585a64;border-radius:3px;"></div>
<div class="a" style="left:2320px;top:1558px;width:30px;height:30px;border-radius:50%;background:#d0d0d0"></div>
<div class="a" style="left:2630.0px;top:1548.0px;width:71.5px;height:49.0px;background:#28292f;border-radius:8px;"></div>
<div class="t" style="left:2646.0px;top:1558.6px;font-size:27.62px;color:#fff;">0</div>
<div class="t" style="left:2118.0px;top:1633.6px;font-size:29.80px;color:#fff;transform:scaleX(0.9558);transform-origin:0.0px 0;">roughness</div>
<div class="a" style="left:2321.0px;top:1647.0px;width:284.5px;height:5.0px;background:#585a64;border-radius:3px;"></div>
<div class="a" style="left:2321.0px;top:1647.0px;width:193.0px;height:5.0px;background:#3a7be8;border-radius:3px;"></div>
<div class="a" style="left:2499px;top:1634.5px;width:30px;height:30px;border-radius:50%;background:#d0d0d0"></div>
<div class="a" style="left:2630.0px;top:1624.0px;width:71.5px;height:49.0px;background:#28292f;border-radius:8px;"></div>
<div class="a" style="left:2630px;top:1624px;width:64px;height:49px;overflow:hidden">
<div class="t" style="left:16.0px;top:10.6px;font-size:27.62px;color:#fff;transform:scaleX(0.9676);transform-origin:0.0px 0;">0.69</div>
</div>
<div class="t" style="left:2118.0px;top:1713.8px;font-size:29.80px;color:#fff;transform:scaleX(0.9740);transform-origin:0.0px 0;">metal…xture</div>
<div class="a" style="left:2316.5px;top:1715.0px;width:31.0px;height:30.0px;background:#8a8996;border-radius:4px;"></div>
<div class="a" style="left:2052.0px;top:1745.0px;width:714.0px;height:9.0px;background:#2f313c;"></div>
<div class="a" style="left:2060px;top:565px;width:693px;height:1180px;border:6px solid #e8625a;border-radius:13px"></div>
</body></html>
